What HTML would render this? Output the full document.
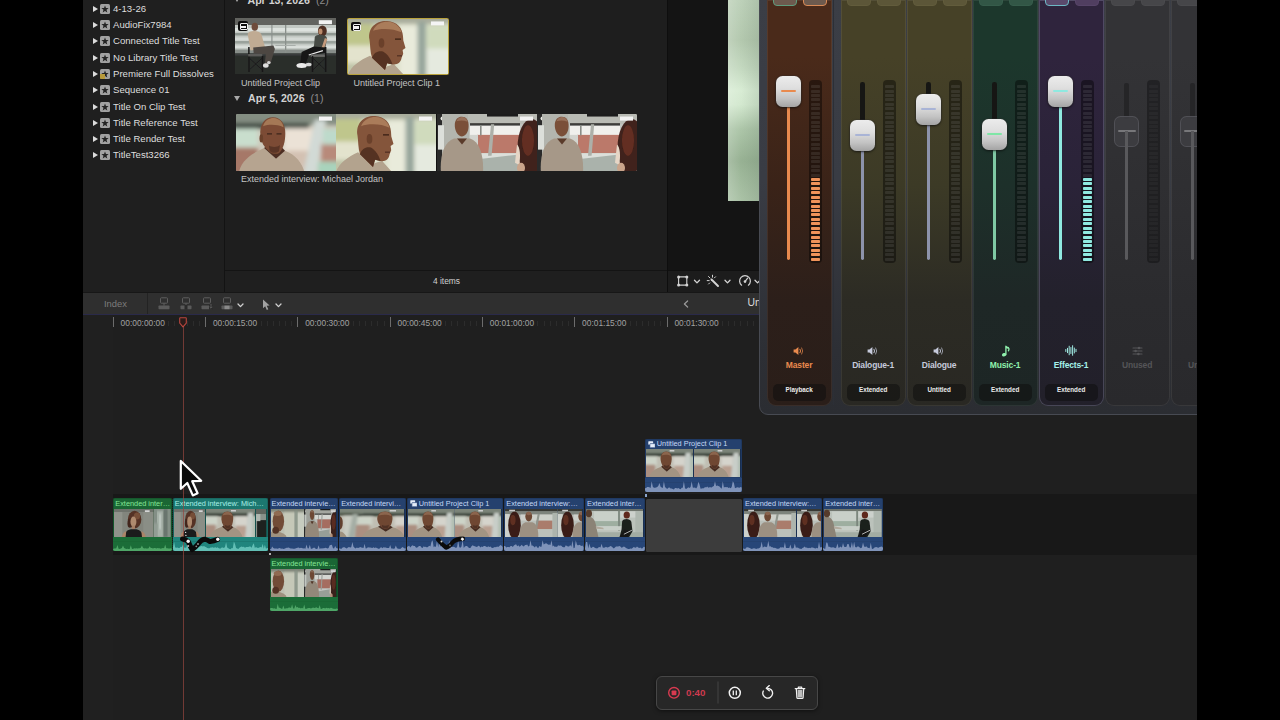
<!DOCTYPE html>
<html lang="en">
<head>
<meta charset="utf-8">
<title>Timeline Mixer</title>
<style>
*{box-sizing:border-box;margin:0;padding:0}
html,body{width:1280px;height:720px;overflow:hidden;background:#000;}
body{position:relative;font-family:"Liberation Sans",sans-serif;color:#ddd;}
.a{position:absolute}
#app{position:absolute;left:0;top:0;width:1280px;height:720px;background:#1e1e1e;overflow:hidden}
.bar{position:absolute;top:0;height:720px;background:#000;z-index:50}
/* sidebar */
#sidebar{position:absolute;left:83px;top:0;width:141px;height:292px;background:#1f1f1f}
.sbi{position:absolute;left:0;height:14px;width:141px;margin-top:.7px;font-size:9.6px;line-height:14px;color:#dedede;white-space:nowrap}
.sbi .tri{position:absolute;left:10px;top:4px;width:0;height:0;border-left:5.5px solid #dcdcdc;border-top:3px solid transparent;border-bottom:3px solid transparent}
.sbi .ico{position:absolute;left:16.5px;top:2px;width:10px;height:10px;background:#a2a2a2;border-radius:1.5px}
.sbi .ico svg{position:absolute;left:1px;top:1px}
.sbi .lbl{position:absolute;left:30px;top:0}
/* browser */
#browser{position:absolute;left:224px;top:0;width:444px;height:292px;background:#1e1e1e;border-left:1px solid #131313}
#viewer{position:absolute;left:667px;top:0;width:93px;height:292px;background:#141414;border-left:1px solid #0e0e0e}
.cap{position:absolute;font-size:9px;color:#c4c4c4;white-space:nowrap;line-height:11px}
.dh{position:absolute;font-size:10.6px;font-weight:700;color:#d2d2d2;white-space:nowrap;line-height:12px}
.dh i{font-style:normal;font-weight:400;color:#8c8c8c;margin-left:6px}
.dtri{position:absolute;width:0;height:0;border-top:5.5px solid #a8a8a8;border-left:3.2px solid transparent;border-right:3.2px solid transparent}
.th{position:absolute;overflow:hidden}
.badge{position:absolute;left:3px;top:3px;width:10px;height:9.5px;background:#0c0c0c;border-radius:2px}
.badge:before{content:"";position:absolute;left:2px;top:2px;width:6px;height:5px;border:1px solid #f0f0f0;border-radius:1px}
.badge:after{content:"";position:absolute;left:2px;top:4.5px;width:6px;height:2.5px;background:#f0f0f0}
/* mixer */
#mixer{position:absolute;left:759px;top:-10px;width:460px;height:425px;background:linear-gradient(180deg,#3b3e46 0%,#393c44 45%,#2d2f35 85%,#2b2d32 100%);border:1px solid #474a52;border-radius:9px;overflow:hidden}
#mixer>*{margin-top:9px;margin-left:-1px}
.strip{position:absolute;top:0;width:64.8px;margin-left:-1.4px !important;height:405.5px;border-radius:0 0 9px 9px;box-shadow:inset 0 0 0 1px rgba(255,255,255,.07);overflow:hidden}
.strip.hl{box-shadow:inset 0 0 0 1px rgba(170,170,200,.28)}
.tb{position:absolute;top:-6px;width:24px;height:11.5px;border:1px solid #555;border-radius:4px}
.trk{position:absolute;border-radius:1.4px}
.meter{position:absolute;left:41.5px;top:79.5px;width:13px;height:183px;border-radius:4px}
.meter i{position:absolute;left:2px;width:9px;height:3px;border-radius:.8px}
.knob{position:absolute;left:9px;width:25px;height:31px;border-radius:6.5px;background:linear-gradient(180deg,#ececec 0%,#dedede 40%,#c4c4c4 72%,#a4a4a4 100%);box-shadow:0 1px 2.5px rgba(0,0,0,.6),0 0 0 .6px rgba(60,60,60,.55)}
.knob b{position:absolute;left:5px;right:5px;top:14px;height:2.2px;border-radius:1px}
.knob.dimk{background:rgba(62,62,66,.88);box-shadow:inset 0 0 0 1px rgba(110,110,116,.42)}
.knob.dimk b{left:3.5px;right:3.5px;top:14.2px;height:2px}
.knob.dimk u{position:absolute;left:10.9px;top:15px;width:3px;height:16px;background:#59595c}
.sl{position:absolute;left:0;width:64px;top:359.8px;text-align:center;font-size:8.5px;font-weight:700;line-height:11px;white-space:nowrap;letter-spacing:-.15px}
.pill{position:absolute;left:5.5px;top:383.5px;width:53px;height:17px;border-radius:5px;background:rgba(14,14,14,.55);text-align:center;font-size:6.3px;font-weight:700;color:#ececec;line-height:12px}
/* toolbar */
#toolbar{position:absolute;left:83px;top:291.6px;width:677px;height:23.4px;background:#2f2f2f;border-top:1px solid #171717;border-bottom:1.6px solid #2a2a4a}
#timeline{position:absolute;left:83px;top:314px;width:1114px;height:406px;background:#1f1f1f}
.tc{position:absolute;top:318px;font-size:8.4px;color:#a2a2a2;white-space:nowrap;line-height:10px}
.tick{position:absolute;top:317.3px;width:1.2px;height:9.6px;background:#6c6c6c}
.mt{position:absolute;top:321px;width:1px;height:5px;background:#2c2c2c}
#ruler{position:absolute;left:0;top:0;width:760px;height:0}
/* clips */
.clip{position:absolute;overflow:hidden;border-radius:2px}
.clip .t{position:absolute;left:3px;top:0.7px;font-size:7.35px;line-height:10px;white-space:nowrap}
.clip .thumb{position:absolute;left:1.2px;right:1.2px;top:10.7px;height:28.3px;overflow:hidden}
.clip .thumb:after{content:"";position:absolute;left:0;top:0;right:0;bottom:0;background:rgba(24,32,28,.13)}
.clip .wave{position:absolute;left:0;right:0;bottom:0;height:14px}
.g{background:#1f6b33}.g .t{color:#8be08f}
.tl{background:#1f7a74}.tl .t{color:#9ee8e0}
.b{background:#274a78}.b .t{color:#a9c4ec}
</style>
</head>
<body>
<div id="app">
<svg width="0" height="0" style="position:absolute">
<defs>
<filter id="bl1" x="-10%" y="-10%" width="120%" height="120%"><feGaussianBlur stdDeviation="1.2"/></filter>
<filter id="bl2" x="-10%" y="-10%" width="120%" height="120%"><feGaussianBlur stdDeviation="2.2"/></filter>
<filter id="bl05" x="-10%" y="-10%" width="120%" height="120%"><feGaussianBlur stdDeviation="0.6"/></filter>
<!-- A: close-up, front-left -->
<symbol id="fA" viewBox="0 0 100 56" preserveAspectRatio="none">
<rect width="100" height="56" fill="#cfc9bb"/>
<g filter="url(#bl2)">
<rect x="-5" y="-5" width="110" height="16" fill="#848e82"/>
<rect x="-5" y="9" width="78" height="5.5" fill="#39433a"/>
<rect x="-5" y="14.5" width="27" height="18" fill="#c9decd"/>
<rect x="-5" y="33" width="27" height="28" fill="#a67868"/>
<rect x="48" y="14" width="28" height="26" fill="#ebe2d6"/>
<rect x="50" y="36" width="24" height="25" fill="#d3c1b2"/>
<polygon points="79,6 90,6 80,60 67,60" fill="#d2dad6"/>
<rect x="87" y="15" width="20" height="15" fill="#bddacb"/>
<rect x="85" y="30" width="20" height="17" fill="#b88a7a"/>
<rect x="82" y="47" width="24" height="14" fill="#a9d3bc"/>
</g>
<g filter="url(#bl05)">
<path d="M3,57 C6,44 18,38 28,33.5 L40,44 L49,36 C60,40 66,48 68.5,57 Z" fill="#b6a490"/>
<path d="M28,33.5 L40,44 L49,36 L46,33 L31,31 Z" fill="#4e2f22"/>
<path d="M24.5,22 C23,10 29,3.2 37,3.3 C45,3.4 49.5,10 49.3,19 C49.3,27 47.5,34 43.5,38 C40.5,40 36,39.5 32.5,36 C28,32 25.5,28 24.5,22 Z" fill="#7b4c35"/>
<path d="M27,12 C29,5.5 34,3.8 38,4 C43,4.4 47,8 47.5,13 C41,10 33,10 27,12 Z" fill="#a57857"/>
<ellipse cx="25.3" cy="24" rx="1.8" ry="4" fill="#69402c"/>
<path d="M33,31 C36,33 41,33 44,30.5 L43,36.5 C40,39 36,38.6 33.5,36 Z" fill="#5a3526"/>
<path d="M31,19.5 h5 M40.5,19.5 h5" stroke="#3f251a" stroke-width="1.3"/>
</g>
<rect x="83" y="2.5" width="13" height="4" fill="#f4f4f4"/>
</symbol>
<!-- B: profile close-up -->
<symbol id="fB" viewBox="0 0 100 56" preserveAspectRatio="none">
<rect width="100" height="56" fill="#dde0cb"/>
<g filter="url(#bl2)">
<rect x="-5" y="-5" width="110" height="10" fill="#a8ac9b"/>
<rect x="-5" y="5" width="30" height="24" fill="#bfc68c"/>
<rect x="-5" y="27" width="30" height="18" fill="#e3e3cd"/>
<rect x="52" y="7" width="18" height="52" fill="#e9ebdb"/>
<rect x="69.5" y="3" width="8.5" height="58" fill="#96a59b"/>
<rect x="79" y="7" width="26" height="25" fill="#d0dbbd"/>
<rect x="79" y="30" width="26" height="30" fill="#e5eadf"/>
<rect x="-5" y="45" width="18" height="15" fill="#c0c5a8"/>
</g>
<g filter="url(#bl05)">
<path d="M0,57 C3,48 12,42 22,37.5 L36,49 L46,46 L56,57 Z" fill="#b3a38e"/>
<path d="M21.5,21 C19.5,9 28,1.5 39,2 C49,2.5 54.5,9 55,17.5 L55.3,22 L57.5,29.5 L54.6,31.5 L55.2,35.5 L53.6,39.5 C53,44.5 49,47 44.5,46.2 L39,45 L37,52 L24,39.5 C22,33 22.4,27 21.5,21 Z" fill="#84543a"/>
<path d="M25,12 C28,4.5 35,2.6 40,2.9 C47,3.3 52,7.5 53.5,13.5 C45,9.5 33,9 25,12 Z" fill="#aa7b5a"/>
<path d="M24,39.5 C26,34 30,32 35,33 C40,36 43,41 44.5,46.2 L39,45 L37,52 Z" fill="#543222"/>
<ellipse cx="33.5" cy="24.5" rx="2.8" ry="4.8" fill="#6a3f2b"/>
<path d="M47,20.5 h6" stroke="#3f251a" stroke-width="1.4"/>
<path d="M49,37.5 h5" stroke="#4a2b1f" stroke-width="1.1"/>
</g>
<rect x="83" y="2.5" width="13" height="4" fill="#f4f4f4"/>
</symbol>
<!-- C: medium shot with hair on right -->
<symbol id="fC" viewBox="0 0 100 56" preserveAspectRatio="none">
<rect width="100" height="56" fill="#c2c4be"/>
<g filter="url(#bl05)">
<rect x="-3" y="-3" width="8" height="62" fill="#2b2c29"/>
<ellipse cx="5.5" cy="4.5" rx="2" ry="2" fill="#e8e8e4"/>
<rect x="5" y="-3" width="27" height="62" fill="#b3b5ae"/>
<rect x="1" y="11" width="6" height="24" fill="#dcdfda"/>
<rect x="31" y="-3" width="72" height="13" fill="#b9bbb4"/>
<rect x="50" y="-3" width="31" height="5.5" fill="#1d1d1b"/>
<rect x="33" y="9" width="50" height="2.6" fill="#3d3d3a"/>
<rect x="33" y="11.5" width="50" height="9.5" fill="#f0f0ec"/>
<rect x="40" y="20.5" width="42" height="18" fill="#bb796a"/>
<rect x="33" y="20.5" width="8" height="20" fill="#d2d4ce"/>
<rect x="34" y="38.5" width="54" height="20" fill="#dcdfda"/>
<polygon points="45,44 80,40 84,58 40,58" fill="#aab2ab"/>
<polygon points="54,10 57.2,10 54.6,41 51,41" fill="#adb0a9"/>
<rect x="43" y="11" width="1.6" height="10" fill="#8a8d87"/>
</g>
<g filter="url(#bl05)">
<path d="M4,58 C2.5,42 7,27 17,24 L33,24 C43,27 47,42 46,58 Z" fill="#a69888"/>
<path d="M20,24 L25,30 L30,24 Z" fill="#5a3a2a"/>
<path d="M17.8,12 C17.5,5 21,2.6 25,2.6 C29,2.6 32,5.5 31.6,12 C31.4,17 29.5,21.5 25,22 C21,21.8 18.2,17 17.8,12 Z" fill="#7a5039"/>
<path d="M19.5,7 C21,3.6 23.5,3 25,3 C27.5,3 30,4.6 30.6,7.6 C27,6 23,6 19.5,7 Z" fill="#97705a"/>
<ellipse cx="94.5" cy="33" rx="14" ry="28" fill="#40201a"/>
<ellipse cx="91" cy="26" rx="6" ry="15" fill="#642f22"/>
<path d="M80,30 C83,32 84,42 82,50 L78,48 Z" fill="#e6d6c6"/>
<ellipse cx="84" cy="53" rx="4" ry="5" fill="#c9a48b"/>
</g>
<rect x="83" y="2.5" width="13" height="4" fill="#f2f2f2"/>
</symbol>
<!-- D: wide two-shot -->
<symbol id="fD" viewBox="0 0 100 56" preserveAspectRatio="none">
<rect width="100" height="56" fill="#2b2d2c"/>
<g filter="url(#bl05)">
<rect x="0" y="0" width="100" height="7.5" fill="#62645f"/>
<rect x="0" y="7" width="100" height="28.5" fill="#c2c8c3"/>
<rect x="0" y="10" width="100" height="3.5" fill="#dde2de"/>
<rect x="0" y="15" width="100" height="2.5" fill="#8f9791"/>
<rect x="0" y="19.5" width="100" height="3" fill="#d5dad6"/>
<rect x="0" y="23" width="100" height="2.6" fill="#9aa29c"/>
<rect x="0" y="27.5" width="100" height="2.5" fill="#d9deda"/>
<rect x="0" y="31.5" width="100" height="4" fill="#878d89"/>
<rect x="36" y="7" width="1.1" height="28" fill="#8a908c"/>
<rect x="49.5" y="7" width="1.3" height="28" fill="#8a908c"/>
<rect x="40" y="27" width="20" height="1" fill="#a8aeaa"/>
<rect x="0" y="35.5" width="100" height="21" fill="#2b2d2c"/>
<rect x="0" y="35.5" width="100" height="2" fill="#3b3e3c"/>
<!-- man -->
<ellipse cx="19.6" cy="8.8" rx="3.2" ry="4" fill="#6e4c3a"/>
<path d="M12.5,16 C13.5,12 24,12 26,16 L30,30 L15.5,32.5 Z" fill="#c0ab93"/>
<path d="M18,29.5 L38,27.5 L39.5,31 L35,46 L29.5,46 L30.5,36 L18.5,35.5 Z" fill="#4d4743"/>
<rect x="13" y="29" width="1.5" height="25" fill="#191919"/>
<rect x="13" y="36" width="14" height="2.4" fill="#5a5a58"/>
<rect x="26.5" y="38" width="1.5" height="16" fill="#191919"/>
<path d="M14,40 L27,52 M27,40 L14,52" stroke="#1c1c1c" stroke-width=".9"/>
<ellipse cx="30.5" cy="47.5" rx="2.8" ry="2.2" fill="#dedede"/>
<ellipse cx="33.5" cy="44.6" rx="1.8" ry="1.6" fill="#d2d2d2"/>
<!-- woman -->
<ellipse cx="86.5" cy="13" rx="4.4" ry="5.6" fill="#4e2e22"/>
<ellipse cx="84.6" cy="13.6" rx="2" ry="3" fill="#b98a6a"/>
<path d="M79,19 C80,16 90,16 91,20 L89.5,30 L78,30 Z" fill="#474b45"/>
<path d="M89,20 L91.5,21 L88,31 L80,33 L79.5,31 L86,29 Z" fill="#c49a7c"/>
<path d="M66,34 L78,28.5 L90,29.5 L89,35 L73,37.5 L69.5,47 L64.5,46.5 Z" fill="#141414"/>
<path d="M73,37 L87,32.6" stroke="#ececec" stroke-width="1.3"/>
<ellipse cx="66" cy="47.5" rx="5.2" ry="2.5" fill="#ebebeb"/>
<ellipse cx="73" cy="46.5" rx="3" ry="1.8" fill="#d8d8d8"/>
<rect x="75" y="36.5" width="15" height="2.4" fill="#6a6a68"/>
<rect x="76" y="38" width="1.5" height="16" fill="#191919"/>
<rect x="89" y="29" width="1.5" height="25" fill="#191919"/>
<path d="M77,40 L89.5,52 M89.5,40 L77,52" stroke="#1c1c1c" stroke-width=".9"/>
</g>
<rect x="83" y="2.2" width="13" height="4" fill="#f2f2f2"/>
</symbol>
<!-- W: woman close (timeline) -->
<symbol id="fW" viewBox="0 0 100 56" preserveAspectRatio="none">
<rect width="100" height="56" fill="#92958c"/>
<g filter="url(#bl1)">
<rect x="-3" y="-3" width="106" height="9" fill="#7d8078"/>
<rect x="-3" y="6" width="24" height="52" fill="#a2a59c"/>
<rect x="74" y="6" width="30" height="52" fill="#9c9f96"/>
<ellipse cx="52" cy="21" rx="17" ry="17.5" fill="#5e3525"/>
<ellipse cx="58" cy="14" rx="8" ry="7" fill="#85543a"/>
<ellipse cx="40" cy="28" rx="6" ry="9" fill="#4a281c"/>
<ellipse cx="49" cy="25" rx="7.5" ry="10" fill="#c59a7a"/>
<rect x="45" y="33" width="8" height="7" fill="#b88c6e"/>
<path d="M24,58 C26,45 35,41 43,40 L57,40 C66,42 73,46 75,58 Z" fill="#1a1a1a"/>
<path d="M19,58 C21,49 25,45 31,44 L29,58 Z" fill="#c09474"/>
<path d="M81,58 C79,49 75,45 69,44 L71,58 Z" fill="#c09474"/>
</g>
<rect x="78" y="2.5" width="12" height="3.5" fill="#f0f0f0"/>
</symbol>
<!-- N: narrow gray filler -->
<symbol id="fN" viewBox="0 0 100 56" preserveAspectRatio="none">
<rect width="100" height="56" fill="#94a096"/>
<g filter="url(#bl2)">
<rect x="18" y="4" width="34" height="52" fill="#bcc8be"/>
<rect x="30" y="10" width="12" height="30" fill="#d4ded6"/>
<rect x="58" y="0" width="22" height="56" fill="#76827a"/>
<rect x="-4" y="28" width="26" height="30" fill="#a4b0a6"/>
</g>
</symbol>
<!-- F: medium shot, hair on left -->
<symbol id="fF" viewBox="0 0 100 56" preserveAspectRatio="none">
<rect width="100" height="56" fill="#d3d7d0"/>
<g filter="url(#bl1)">
<rect x="-3" y="-3" width="106" height="8" fill="#3c3d39"/>
<rect x="0" y="5" width="100" height="6" fill="#8e938b"/>
<rect x="-3" y="10" width="12" height="50" fill="#e9ece6"/>
<rect x="30" y="11" width="72" height="12" fill="#e8ebe4"/>
<rect x="60" y="23" width="30" height="17" fill="#c08a78"/>
<rect x="56" y="40" width="48" height="20" fill="#d5dad3"/>
<polygon points="62,10 66,10 60,44 56,44" fill="#a2a89f"/>
<rect x="90" y="8" width="12" height="50" fill="#c4cbc3"/>
<ellipse cx="18" cy="32" rx="12" ry="27" fill="#401f17"/>
<ellipse cx="15" cy="22" rx="5" ry="10" fill="#6a3323"/>
<path d="M28,58 C26,42 31,28 39,26 L52,26 C61,29 64,42 63,58 Z" fill="#b0a191"/>
<ellipse cx="45" cy="15" rx="6.5" ry="9.5" fill="#7a4f38"/>
<ellipse cx="45" cy="9" rx="5" ry="3.4" fill="#9a6e54"/>
</g>
<rect x="8" y="1.5" width="11" height="3" fill="#e2e2e2"/>
</symbol>
<!-- G: wide bright shot -->
<symbol id="fG" viewBox="0 0 100 56" preserveAspectRatio="none">
<rect width="100" height="56" fill="#d4dbd3"/>
<g filter="url(#bl1)">
<rect x="-3" y="-3" width="106" height="7" fill="#7b8279"/>
<rect x="14" y="5" width="42" height="20" fill="#e4ebe3"/>
<rect x="14" y="24" width="50" height="10" fill="#b2c4b4"/>
<rect x="56" y="3" width="3" height="40" fill="#8a968b"/>
<rect x="60" y="5" width="40" height="12" fill="#e7ece6"/>
<rect x="86" y="4" width="16" height="56" fill="#c5cec5"/>
<rect x="14" y="34" width="48" height="8" fill="#e2e8e1"/>
<rect x="-2" y="46" width="104" height="12" fill="#b7c1b7"/>
<path d="M-2,58 L-2,15 C7,12 15,18 17,30 L22,58 Z" fill="#9d9283"/>
<ellipse cx="5" cy="9" rx="5.5" ry="7.5" fill="#5e3f2d"/>
<path d="M17,34 L30,37 L31,40 L18,39 Z" fill="#c9bfb0"/>
<ellipse cx="71" cy="12" rx="5.5" ry="7" fill="#6b2a1b"/>
<path d="M63,24 C65,18 77,18 79,25 L81,44 L74,58 L58,58 L62,40 Z" fill="#1f201e"/>
<path d="M57,58 L67,41 L77,43 L71,58 Z" fill="#131313"/>
<path d="M66,50 L80,42" stroke="#e8e8e8" stroke-width="1.6"/>
</g>
</symbol>
<!-- H: close-up, dark left edge (looking left) -->
<symbol id="fH" viewBox="0 0 100 56" preserveAspectRatio="none">
<rect width="100" height="56" fill="#d6d8c8"/>
<g filter="url(#bl2)">
<rect x="-5" y="-5" width="110" height="11" fill="#8f9486"/>
<rect x="40" y="6" width="30" height="50" fill="#dfe2cf"/>
<rect x="70" y="4" width="10" height="56" fill="#a2ad9f"/>
<rect x="80" y="8" width="25" height="50" fill="#e2e6d8"/>
</g>
<g filter="url(#bl1)">
<ellipse cx="22" cy="24" rx="17" ry="21" fill="#80523a"/>
<ellipse cx="20" cy="9" rx="12" ry="5" fill="#a3775a"/>
<path d="M-2,58 L-2,46 C8,42 30,44 44,52 L48,58 Z" fill="#b3a28e"/>
<ellipse cx="14" cy="42" rx="10" ry="7" fill="#5b3625"/>
</g>
</symbol>
<symbol id="fK" viewBox="0 0 100 56" preserveAspectRatio="none">
<rect width="100" height="56" fill="#9aa39a"/>
<rect x="0" y="0" width="100" height="10" fill="#6a7068"/>
<rect x="10" y="22" width="90" height="34" fill="#1e2220"/>
<rect x="0" y="10" width="40" height="14" fill="#c5cec6"/>
</symbol>
<symbol id="fE" viewBox="0 0 100 56" preserveAspectRatio="none">
<rect width="100" height="56" fill="#d9d6c9"/>
<g filter="url(#bl2)">
<rect x="-5" y="-5" width="110" height="14" fill="#8b9487"/>
<rect x="-5" y="8.5" width="110" height="5.5" fill="#2b3429"/>
<rect x="-5" y="15" width="28" height="17" fill="#e9efe2"/>
<rect x="-5" y="31" width="24" height="30" fill="#c2a090"/>
<rect x="58" y="15" width="24" height="19" fill="#f2efe6"/>
<rect x="60" y="33" width="20" height="27" fill="#d1b4a3"/>
<polygon points="84,8 95,8 92,60 78,60" fill="#e3e8e2"/>
<rect x="93" y="14" width="12" height="44" fill="#c9d7c9"/>
</g>
<g filter="url(#bl05)">
<path d="M6,58 C9,44 22,38 32,35 L44,45 L55,36 C66,40 72,48 74,58 Z" fill="#b7a692"/>
<path d="M32,35 L44,45 L55,36 L51,33 L36,32 Z" fill="#4e2f22"/>
<path d="M31,22 C30,11 35,5 43,5 C51,5 55,11 54.5,20 C54,28 52,34 48.5,37.5 C45.5,40 41,39.5 38,36.5 C34,32.5 32,28 31,22 Z" fill="#7b4d36"/>
<path d="M33,13 C35,7 39,5.5 43,5.6 C48,5.8 52,9 53,14 C47,11 39,11 33,13 Z" fill="#9d7054"/>
<path d="M38,31.5 C41,33.5 46,33.5 49,31 L48,36.5 C45,39 41,38.6 38.5,36 Z" fill="#583425"/>
</g>
<rect x="50" y="2" width="10" height="3" fill="#e8e8e8"/>
</symbol>
<symbol id="fE2" viewBox="0 0 100 56" preserveAspectRatio="none">
<rect width="100" height="56" fill="#d9d6c9"/>
<g transform="translate(27,0)">
<rect width="100" height="56" fill="#d9d6c9"/>
<g filter="url(#bl2)">
<rect x="-5" y="-5" width="110" height="14" fill="#8b9487"/>
<rect x="-5" y="8.5" width="110" height="5.5" fill="#2b3429"/>
<rect x="-5" y="15" width="28" height="17" fill="#e9efe2"/>
<rect x="-5" y="31" width="24" height="30" fill="#c2a090"/>
<rect x="58" y="15" width="24" height="19" fill="#f2efe6"/>
<rect x="60" y="33" width="20" height="27" fill="#d1b4a3"/>
<polygon points="84,8 95,8 92,60 78,60" fill="#e3e8e2"/>
<rect x="93" y="14" width="12" height="44" fill="#c9d7c9"/>
</g>
<g filter="url(#bl05)">
<path d="M6,58 C9,44 22,38 32,35 L44,45 L55,36 C66,40 72,48 74,58 Z" fill="#b7a692"/>
<path d="M32,35 L44,45 L55,36 L51,33 L36,32 Z" fill="#4e2f22"/>
<path d="M31,22 C30,11 35,5 43,5 C51,5 55,11 54.5,20 C54,28 52,34 48.5,37.5 C45.5,40 41,39.5 38,36.5 C34,32.5 32,28 31,22 Z" fill="#7b4d36"/>
<path d="M33,13 C35,7 39,5.5 43,5.6 C48,5.8 52,9 53,14 C47,11 39,11 33,13 Z" fill="#9d7054"/>
<path d="M38,31.5 C41,33.5 46,33.5 49,31 L48,36.5 C45,39 41,38.6 38.5,36 Z" fill="#583425"/>
</g>
<rect x="50" y="2" width="10" height="3" fill="#e8e8e8"/>
</g>
<g filter="url(#bl2)"><rect x="-5" y="-5" width="40" height="14" fill="#8b9487"/><rect x="-5" y="8" width="36" height="5" fill="#434c3b"/><rect x="6" y="13" width="14" height="44" fill="#e4e6dc"/><polygon points="20,10 28,10 22,60 12,60" fill="#b9c2b8"/></g><g filter="url(#bl05)"><path d="M-2,14 C3,14 5,22 4,32 C3,38 2,40 -2,42 Z" fill="#6d4531"/><path d="M-2,44 C4,44 9,50 11,58 L-2,58 Z" fill="#b3a28e"/></g>
</symbol>
</defs>
</svg>
<div id="sidebar">
<div class="sbi" style="top:1.0px"><span class="tri"></span><span class="ico"><svg width="8" height="8" viewBox="0 0 10 10"><polygon points="5,0.6 6.2,3.8 9.6,3.9 6.9,6 7.9,9.3 5,7.4 2.1,9.3 3.1,6 0.4,3.9 3.8,3.8" fill="#242424"/></svg></span><span class="lbl">4-13-26</span></div>
<div class="sbi" style="top:17.4px"><span class="tri"></span><span class="ico"><svg width="8" height="8" viewBox="0 0 10 10"><polygon points="5,0.6 6.2,3.8 9.6,3.9 6.9,6 7.9,9.3 5,7.4 2.1,9.3 3.1,6 0.4,3.9 3.8,3.8" fill="#242424"/></svg></span><span class="lbl">AudioFix7984</span></div>
<div class="sbi" style="top:33.7px"><span class="tri"></span><span class="ico"><svg width="8" height="8" viewBox="0 0 10 10"><polygon points="5,0.6 6.2,3.8 9.6,3.9 6.9,6 7.9,9.3 5,7.4 2.1,9.3 3.1,6 0.4,3.9 3.8,3.8" fill="#242424"/></svg></span><span class="lbl">Connected Title Test</span></div>
<div class="sbi" style="top:50.0px"><span class="tri"></span><span class="ico"><svg width="8" height="8" viewBox="0 0 10 10"><polygon points="5,0.6 6.2,3.8 9.6,3.9 6.9,6 7.9,9.3 5,7.4 2.1,9.3 3.1,6 0.4,3.9 3.8,3.8" fill="#242424"/></svg></span><span class="lbl">No Library Title Test</span></div>
<div class="sbi" style="top:66.3px"><span class="tri"></span><span class="ico"><svg width="8" height="8" viewBox="0 0 10 10"><polygon points="5,0.6 6.2,3.8 9.6,3.9 6.9,6 7.9,9.3 5,7.4 2.1,9.3 3.1,6 0.4,3.9 3.8,3.8" fill="#242424"/></svg></span><span class="a" style="left:16.5px;top:7px;width:5px;height:5px;background:#b89a3a;border-radius:0 0 0 1.5px"></span><span class="lbl">Premiere Full Dissolves</span></div>
<div class="sbi" style="top:82.6px"><span class="tri"></span><span class="ico"><svg width="8" height="8" viewBox="0 0 10 10"><polygon points="5,0.6 6.2,3.8 9.6,3.9 6.9,6 7.9,9.3 5,7.4 2.1,9.3 3.1,6 0.4,3.9 3.8,3.8" fill="#242424"/></svg></span><span class="lbl">Sequence 01</span></div>
<div class="sbi" style="top:98.9px"><span class="tri"></span><span class="ico"><svg width="8" height="8" viewBox="0 0 10 10"><polygon points="5,0.6 6.2,3.8 9.6,3.9 6.9,6 7.9,9.3 5,7.4 2.1,9.3 3.1,6 0.4,3.9 3.8,3.8" fill="#242424"/></svg></span><span class="lbl">Title On Clip Test</span></div>
<div class="sbi" style="top:115.2px"><span class="tri"></span><span class="ico"><svg width="8" height="8" viewBox="0 0 10 10"><polygon points="5,0.6 6.2,3.8 9.6,3.9 6.9,6 7.9,9.3 5,7.4 2.1,9.3 3.1,6 0.4,3.9 3.8,3.8" fill="#242424"/></svg></span><span class="lbl">Title Reference Test</span></div>
<div class="sbi" style="top:131.5px"><span class="tri"></span><span class="ico"><svg width="8" height="8" viewBox="0 0 10 10"><polygon points="5,0.6 6.2,3.8 9.6,3.9 6.9,6 7.9,9.3 5,7.4 2.1,9.3 3.1,6 0.4,3.9 3.8,3.8" fill="#242424"/></svg></span><span class="lbl">Title Render Test</span></div>
<div class="sbi" style="top:147.8px"><span class="tri"></span><span class="ico"><svg width="8" height="8" viewBox="0 0 10 10"><polygon points="5,0.6 6.2,3.8 9.6,3.9 6.9,6 7.9,9.3 5,7.4 2.1,9.3 3.1,6 0.4,3.9 3.8,3.8" fill="#242424"/></svg></span><span class="lbl">TitleTest3266</span></div>
</div>
<div id="browser">
  <!-- coordinates relative to browser left=224 -->
  <div class="dtri" style="left:9px;top:-3px"></div>
  <div class="dh" style="left:22.5px;top:-6px">Apr 13, 2026<i>(2)</i></div>
  <div class="th" style="left:9.5px;top:18px;width:101.5px;height:56px"><svg width="101" height="56"><use href="#fD" width="101" height="56"/></svg>
    <div class="badge"></div></div>
  <div class="th" style="left:122px;top:17.5px;width:102px;height:57px;border:1px solid #b9a23c;border-radius:1.5px"><svg width="100" height="55"><use href="#fB" width="100" height="55"/></svg>
    <div class="badge"></div></div>
  <div class="cap" style="left:16px;top:77.5px">Untitled Project Clip</div>
  <div class="cap" style="left:128.5px;top:77.5px">Untitled Project Clip 1</div>
  <div class="dtri" style="left:9px;top:95.5px"></div>
  <div class="dh" style="left:23px;top:92px">Apr 5, 2026<i>(1)</i></div>
  <div class="th" style="left:10.5px;top:114px;width:401.5px;height:57px;border-radius:1.5px;background:#111">
    <svg class="a" style="left:0;top:0" width="100" height="57"><use href="#fA" width="100" height="57"/></svg>
    <svg class="a" style="left:100.5px;top:0" width="100" height="57"><use href="#fB" width="100" height="57"/></svg>
    <svg class="a" style="left:201px;top:0" width="100" height="57"><use href="#fC" width="100" height="57"/></svg>
    <svg class="a" style="left:301.5px;top:0" width="100" height="57"><use href="#fC" width="100" height="57"/></svg>
  </div>
  <div class="cap" style="left:16px;top:173.5px">Extended interview: Michael Jordan</div>
  <div class="a" style="left:0;top:270px;width:443px;height:22px;border-top:1px solid #141414;background:#1f1f1f"></div>
  <div class="cap" style="left:0;width:443px;text-align:center;top:276px;font-size:8.4px;color:#d0d0d0">4 items</div>
</div>
<div id="viewer">
  <div class="a" style="left:59.5px;top:0;width:33.5px;height:201px;background:linear-gradient(180deg,#bdd1b9 0%,#b3c8ae 20%,#c4d9c0 34%,#d8ecd4 45%,#d3e8cf 52%,#adc6a9 64%,#97b193 80%,#a3bc9f 92%,#aac2a6 100%);"></div>
  <div class="a" style="left:59.5px;top:0;width:33.5px;height:201px;background:linear-gradient(90deg,rgba(255,255,255,.18),rgba(255,255,255,.0) 40%,rgba(90,110,95,.18) 100%)"></div>
  <div class="a" style="left:0;top:270px;width:93px;height:22px;background:#1c1c1c;border-top:1px solid #101010"></div>
</div>
<div id="timeline">
  <div class="a" style="left:0;top:0;width:30px;height:406px;background:#202020"></div>
  <div class="a" style="left:30px;top:180px;width:1084px;height:60.5px;background:#181818"></div>
</div>
<div id="toolbar">
  <div class="a" style="left:0;top:0;width:65px;height:21px;background:#2f2f2f;border-right:1px solid #232323"></div>
  <div class="a" style="left:21px;top:5px;font-size:9.4px;line-height:12px;color:#7c7c7c">Index</div>
<svg class="a" style="left:75px;top:4.5px" width="12" height="13" viewBox="0 0 12 13"><rect x="2.5" y="0.8" width="7" height="5.4" rx="0.8" fill="none" stroke="#5e5e5e" stroke-width="1"/><rect x="0.5" y="8.6" width="11" height="3.6" rx="0.6" fill="#5a5a5a"/><path d="M6,6.2 V8.6" stroke="#5e5e5e" stroke-width="1"/></svg><svg class="a" style="left:96.6px;top:4.5px" width="12" height="13" viewBox="0 0 12 13"><rect x="2.5" y="0.8" width="7" height="5.4" rx="0.8" fill="none" stroke="#5e5e5e" stroke-width="1"/><rect x="0.5" y="8.6" width="11" height="3.6" rx="0.6" fill="#5a5a5a"/><path d="M6,6.2 V8.6" stroke="#5e5e5e" stroke-width="1"/><rect x="4.5" y="8" width="3" height="4.6" fill="#2b2b2b"/></svg><svg class="a" style="left:117.5px;top:4.5px" width="12" height="13" viewBox="0 0 12 13"><rect x="2.5" y="0.8" width="7" height="5.4" rx="0.8" fill="none" stroke="#5e5e5e" stroke-width="1"/><rect x="0.5" y="8.6" width="11" height="3.6" rx="0.6" fill="#5a5a5a"/><rect x="8" y="8" width="4" height="4.6" fill="#2b2b2b"/><path d="M10,7 v4 M8.6,9.8 l1.4,1.4 l1.4,-1.4" stroke="#5e5e5e" stroke-width="0.9" fill="none"/></svg><svg class="a" style="left:138px;top:4.5px" width="12" height="13" viewBox="0 0 12 13"><rect x="2.5" y="0.8" width="7" height="5.4" rx="0.8" fill="none" stroke="#5e5e5e" stroke-width="1"/><rect x="0.5" y="8.6" width="11" height="3.6" rx="0.6" fill="#5a5a5a"/><rect x="3.5" y="8.6" width="5" height="3.6" fill="#8a8a8a"/></svg><svg class="a" style="left:153.5px;top:10.5px" width="7" height="5" viewBox="0 0 7 5"><path d="M1,1 L3.5,3.6 L6,1" fill="none" stroke="#d0d0d0" stroke-width="1.3" stroke-linecap="round" stroke-linejoin="round"/></svg><svg class="a" style="left:178.5px;top:6px" width="9" height="12" viewBox="0 0 9 12"><path d="M1,0.5 L1,9.2 L3.2,7.2 L4.8,11 L6.3,10.3 L4.7,6.7 L7.6,6.5 Z" fill="#a2a2a2"/></svg><svg class="a" style="left:191.5px;top:10.5px" width="7" height="5" viewBox="0 0 7 5"><path d="M1,1 L3.5,3.6 L6,1" fill="none" stroke="#d0d0d0" stroke-width="1.3" stroke-linecap="round" stroke-linejoin="round"/></svg><svg class="a" style="left:600px;top:7.2px" width="6" height="8" viewBox="0 0 6 8"><path d="M4.6,1 L1.4,4 L4.6,7" fill="none" stroke="#9a9a9a" stroke-width="1.2" stroke-linecap="round" stroke-linejoin="round"/></svg><div class="a" style="left:664.5px;top:4.5px;font-size:10.4px;line-height:12px;color:#dcdcdc">Untitled</div></div>
<div id="ruler">
<div class="mt" style="left:168.2px"></div><div class="mt" style="left:174.3px"></div><div class="mt" style="left:180.5px"></div><div class="mt" style="left:186.6px"></div><div class="mt" style="left:192.8px"></div><div class="mt" style="left:198.9px"></div><div class="tick" style="left:112.7px"></div><div class="tc" style="left:120.6px">00:00:00:00</div>
<div class="mt" style="left:260.5px"></div><div class="mt" style="left:266.6px"></div><div class="mt" style="left:272.8px"></div><div class="mt" style="left:278.9px"></div><div class="mt" style="left:285.1px"></div><div class="mt" style="left:291.2px"></div><div class="tick" style="left:205.0px"></div><div class="tc" style="left:212.9px">00:00:15:00</div>
<div class="mt" style="left:352.8px"></div><div class="mt" style="left:358.9px"></div><div class="mt" style="left:365.1px"></div><div class="mt" style="left:371.2px"></div><div class="mt" style="left:377.4px"></div><div class="mt" style="left:383.5px"></div><div class="tick" style="left:297.3px"></div><div class="tc" style="left:305.2px">00:00:30:00</div>
<div class="mt" style="left:445.1px"></div><div class="mt" style="left:451.2px"></div><div class="mt" style="left:457.4px"></div><div class="mt" style="left:463.5px"></div><div class="mt" style="left:469.7px"></div><div class="mt" style="left:475.8px"></div><div class="tick" style="left:389.6px"></div><div class="tc" style="left:397.5px">00:00:45:00</div>
<div class="mt" style="left:537.4px"></div><div class="mt" style="left:543.5px"></div><div class="mt" style="left:549.7px"></div><div class="mt" style="left:555.8px"></div><div class="mt" style="left:562.0px"></div><div class="mt" style="left:568.1px"></div><div class="tick" style="left:481.9px"></div><div class="tc" style="left:489.8px">00:01:00:00</div>
<div class="mt" style="left:629.7px"></div><div class="mt" style="left:635.8px"></div><div class="mt" style="left:642.0px"></div><div class="mt" style="left:648.1px"></div><div class="mt" style="left:654.3px"></div><div class="mt" style="left:660.4px"></div><div class="tick" style="left:574.2px"></div><div class="tc" style="left:582.1px">00:01:15:00</div>
<div class="mt" style="left:722.0px"></div><div class="mt" style="left:728.1px"></div><div class="mt" style="left:734.3px"></div><div class="mt" style="left:740.4px"></div><div class="mt" style="left:746.6px"></div><div class="mt" style="left:752.7px"></div><div class="tick" style="left:666.5px"></div><div class="tc" style="left:674.4px">00:01:30:00</div>
</div>
<div id="clips">
<div class="clip" style="left:113.3px;top:498.3px;width:58.9px;height:53px;background:#1a6634;box-shadow:inset 0 0 0 .6px #124a26"><div class="t" style="left:2px;color:#86e898">Extended inter…</div><div class="thumb" style="background:#124a26"><div class="a" style="left:0.0px;top:0;width:39.2px;height:28.3px;overflow:hidden"><svg class="a" style="left:0;top:0" width="39.6" height="28.3"><use href="#fW" width="39.6" height="28.3"/></svg></div><div class="a" style="left:39.6px;top:0;width:16.5px;height:28.3px;overflow:hidden"><svg class="a" style="left:0;top:0" width="16.9" height="28.3"><use href="#fN" width="16.9" height="28.3"/></svg></div></div><div class="wave" style="background:#1b6d38"><div class="a" style="left:0;right:0;top:4px;height:1px;background:#1a6634;opacity:.8"></div><svg class="a" style="left:0;bottom:0" width="58.9" height="14" viewBox="0 0 58.9 14" preserveAspectRatio="none"><path d="M0,14 L0.0,12.1 L1.1,11.5 L2.2,11.5 L3.3,11.3 L4.4,8.1 L5.6,11.7 L6.7,12.1 L7.8,11.6 L8.9,11.0 L10.0,8.6 L11.1,11.1 L12.2,11.5 L13.3,12.0 L14.4,11.8 L15.6,11.9 L16.7,12.0 L17.8,8.3 L18.9,11.7 L20.0,11.9 L21.1,11.3 L22.2,11.5 L23.3,11.2 L24.4,11.4 L25.6,11.2 L26.7,11.2 L27.8,10.8 L28.9,8.5 L30.0,10.8 L31.1,11.4 L32.2,11.2 L33.3,11.4 L34.5,11.4 L35.6,11.3 L36.7,9.3 L37.8,11.1 L38.9,11.1 L40.0,11.6 L41.1,11.0 L42.2,11.1 L43.3,11.5 L44.5,10.9 L45.6,11.2 L46.7,11.2 L47.8,11.8 L48.9,11.3 L50.0,11.0 L51.1,11.2 L52.2,7.6 L53.3,11.3 L54.5,11.3 L55.6,11.5 L56.7,11.4 L57.8,11.3 L58.9,11.8 L58.9,14 Z" fill="#4ea667"/></svg></div></div>
<div class="clip" style="left:172.8px;top:498.3px;width:95.2px;height:53px;background:#1c776f;box-shadow:inset 0 0 0 .6px #165a55"><div class="t" style="left:2px;color:#aaf0e8">Extended interview: Mich…</div><div class="thumb" style="background:#165a55"><div class="a" style="left:0.0px;top:0;width:31.5px;height:28.3px;overflow:hidden"><svg class="a" style="left:0;top:0" width="31.9" height="28.3"><use href="#fW" width="31.9" height="28.3"/></svg></div><div class="a" style="left:31.9px;top:0;width:49.5px;height:28.3px;overflow:hidden"><svg class="a" style="left:0;top:0" width="49.9" height="28.3"><use href="#fE" width="49.9" height="28.3"/></svg></div><div class="a" style="left:81.8px;top:0;width:10.6px;height:28.3px;overflow:hidden"><svg class="a" style="left:0;top:0" width="11.0" height="28.3"><use href="#fK" width="11.0" height="28.3"/></svg></div></div><div class="wave" style="background:#20857d"><div class="a" style="left:0;right:0;top:4px;height:1px;background:#1c776f;opacity:.8"></div><svg class="a" style="left:0;bottom:0" width="95.2" height="14" viewBox="0 0 95.2 14" preserveAspectRatio="none"><path d="M0,14 L0.0,10.1 L1.1,5.0 L2.2,10.4 L3.3,10.8 L4.4,10.4 L5.5,11.1 L6.6,11.0 L7.7,9.8 L8.9,10.0 L10.0,7.2 L11.1,10.6 L12.2,10.8 L13.3,10.6 L14.4,6.6 L15.5,11.5 L16.6,10.1 L17.7,10.8 L18.8,10.1 L19.9,9.5 L21.0,9.3 L22.1,8.8 L23.2,10.1 L24.4,9.8 L25.5,10.0 L26.6,9.4 L27.7,9.2 L28.8,8.9 L29.9,9.6 L31.0,9.1 L32.1,9.7 L33.2,10.3 L34.3,11.0 L35.4,11.2 L36.5,11.3 L37.6,10.5 L38.7,10.5 L39.9,10.3 L41.0,10.9 L42.1,9.9 L43.2,10.9 L44.3,10.3 L45.4,10.9 L46.5,11.6 L47.6,11.5 L48.7,10.4 L49.8,10.4 L50.9,10.9 L52.0,10.0 L53.1,5.2 L54.2,10.6 L55.3,11.3 L56.5,11.9 L57.6,12.2 L58.7,10.9 L59.8,11.3 L60.9,4.6 L62.0,7.1 L63.1,10.9 L64.2,11.4 L65.3,11.9 L66.4,10.8 L67.5,9.9 L68.6,9.4 L69.7,9.9 L70.8,9.8 L72.0,10.8 L73.1,9.9 L74.2,10.0 L75.3,10.1 L76.4,9.4 L77.5,9.6 L78.6,10.8 L79.7,7.9 L80.8,6.2 L81.9,11.1 L83.0,10.0 L84.1,10.7 L85.2,11.1 L86.3,10.6 L87.5,10.1 L88.6,10.4 L89.7,6.7 L90.8,11.7 L91.9,7.8 L93.0,11.7 L94.1,11.1 L95.2,11.2 L95.2,14 Z" fill="#62bfb5"/></svg></div></div>
<div class="clip" style="left:269.5px;top:498.3px;width:68.5px;height:53px;background:#25416e;box-shadow:inset 0 0 0 .6px #1b3258"><div class="t" style="left:2px;color:#c6d9f6">Extended intervie…</div><div class="thumb" style="background:#1b3258"><div class="a" style="left:0.0px;top:0;width:33.1px;height:28.3px;overflow:hidden"><svg class="a" style="left:0;top:0" width="33.5" height="28.3"><use href="#fH" width="33.5" height="28.3"/></svg></div><div class="a" style="left:33.5px;top:0;width:32.2px;height:28.3px;overflow:hidden"><svg class="a" style="left:0;top:0" width="32.6" height="28.3"><use href="#fC" width="32.6" height="28.3"/></svg></div></div><div class="wave" style="background:#274678"><div class="a" style="left:0;right:0;top:4px;height:1px;background:#25416e;opacity:.8"></div><svg class="a" style="left:0;bottom:0" width="68.5" height="14" viewBox="0 0 68.5 14" preserveAspectRatio="none"><path d="M0,14 L0.0,12.0 L1.1,11.9 L2.2,9.5 L3.3,11.1 L4.4,11.5 L5.5,11.5 L6.6,11.5 L7.7,11.8 L8.8,11.2 L9.9,11.0 L11.0,11.7 L12.2,11.4 L13.3,11.9 L14.4,11.7 L15.5,11.2 L16.6,10.8 L17.7,10.7 L18.8,10.5 L19.9,11.3 L21.0,11.6 L22.1,11.6 L23.2,11.7 L24.3,11.7 L25.4,11.5 L26.5,11.0 L27.6,10.7 L28.7,10.4 L29.8,11.2 L30.9,10.7 L32.0,10.9 L33.1,11.4 L34.2,11.3 L35.4,11.8 L36.5,7.5 L37.6,11.3 L38.7,11.6 L39.8,7.8 L40.9,11.7 L42.0,11.8 L43.1,11.1 L44.2,10.6 L45.3,11.4 L46.4,11.9 L47.5,11.8 L48.6,8.3 L49.7,12.0 L50.8,11.3 L51.9,11.4 L53.0,11.2 L54.1,11.2 L55.2,10.8 L56.3,11.1 L57.5,11.5 L58.6,10.9 L59.7,8.2 L60.8,7.9 L61.9,7.8 L63.0,11.2 L64.1,11.4 L65.2,9.0 L66.3,11.0 L67.4,11.5 L68.5,11.3 L68.5,14 Z" fill="#7f93b9"/></svg></div></div>
<div class="clip" style="left:339.2px;top:498.3px;width:66.8px;height:53px;background:#25416e;box-shadow:inset 0 0 0 .6px #1b3258"><div class="t" style="left:2px;color:#c6d9f6">Extended intervi…</div><div class="thumb" style="background:#1b3258"><div class="a" style="left:0.0px;top:0;width:64.0px;height:28.3px;overflow:hidden"><svg class="a" style="left:0;top:0" width="64.4" height="28.3"><use href="#fE2" width="64.4" height="28.3"/></svg></div></div><div class="wave" style="background:#274678"><div class="a" style="left:0;right:0;top:4px;height:1px;background:#25416e;opacity:.8"></div><svg class="a" style="left:0;bottom:0" width="66.8" height="14" viewBox="0 0 66.8 14" preserveAspectRatio="none"><path d="M0,14 L0.0,11.6 L1.1,11.4 L2.2,11.9 L3.3,10.7 L4.5,10.2 L5.6,10.3 L6.7,11.0 L7.8,11.4 L8.9,10.5 L10.0,10.1 L11.1,10.6 L12.2,10.2 L13.4,5.0 L14.5,9.8 L15.6,10.7 L16.7,11.4 L17.8,10.5 L18.9,10.9 L20.0,10.7 L21.2,10.1 L22.3,10.5 L23.4,10.7 L24.5,11.0 L25.6,6.8 L26.7,11.6 L27.8,11.3 L28.9,10.2 L30.1,10.5 L31.2,10.4 L32.3,10.7 L33.4,11.0 L34.5,10.2 L35.6,11.1 L36.7,10.5 L37.9,11.0 L39.0,11.4 L40.1,11.9 L41.2,10.7 L42.3,10.3 L43.4,11.3 L44.5,10.2 L45.6,10.6 L46.8,10.4 L47.9,10.9 L49.0,10.9 L50.1,11.0 L51.2,8.0 L52.3,11.5 L53.4,11.4 L54.6,11.8 L55.7,11.5 L56.8,8.4 L57.9,11.1 L59.0,11.7 L60.1,11.7 L61.2,11.9 L62.3,11.0 L63.5,10.0 L64.6,10.7 L65.7,11.5 L66.8,11.6 L66.8,14 Z" fill="#7f93b9"/></svg></div></div>
<div class="clip" style="left:407.3px;top:498.3px;width:95.7px;height:53px;background:#25416e;box-shadow:inset 0 0 0 .6px #1b3258"><svg class="a" style="left:2.6px;top:2.2px" width="7.5" height="7" viewBox="0 0 8 7.5"><rect x="0.3" y="0.3" width="5.2" height="3.6" rx="0.6" fill="#e4ecf8"/><rect x="2" y="2.8" width="5.8" height="4.4" rx="0.6" fill="#e4ecf8" stroke="#27477c" stroke-width=".7"/></svg><div class="t" style="left:11.5px;color:#c6d9f6">Untitled Project Clip 1</div><div class="thumb" style="background:#1b3258"><div class="a" style="left:0.0px;top:0;width:46.2px;height:28.3px;overflow:hidden"><svg class="a" style="left:0;top:0" width="46.6" height="28.3"><use href="#fE" width="46.6" height="28.3"/></svg></div><div class="a" style="left:46.6px;top:0;width:46.2px;height:28.3px;overflow:hidden"><svg class="a" style="left:0;top:0" width="46.6" height="28.3"><use href="#fE" width="46.6" height="28.3"/></svg></div></div><div class="wave" style="background:#274678"><div class="a" style="left:0;right:0;top:4px;height:1px;background:#25416e;opacity:.8"></div><svg class="a" style="left:0;bottom:0" width="95.7" height="14" viewBox="0 0 95.7 14" preserveAspectRatio="none"><path d="M0,14 L0.0,10.1 L1.1,9.2 L2.2,8.8 L3.3,10.4 L4.5,9.0 L5.6,8.3 L6.7,8.9 L7.8,9.1 L8.9,10.6 L10.0,10.8 L11.1,9.7 L12.2,9.0 L13.4,9.0 L14.5,10.5 L15.6,10.9 L16.7,9.2 L17.8,9.9 L18.9,9.8 L20.0,10.5 L21.1,9.7 L22.3,8.7 L23.4,9.5 L24.5,4.8 L25.6,3.3 L26.7,10.2 L27.8,9.2 L28.9,9.9 L30.0,3.3 L31.2,10.6 L32.3,3.3 L33.4,9.9 L34.5,5.9 L35.6,9.4 L36.7,8.9 L37.8,8.1 L38.9,9.1 L40.1,8.7 L41.2,8.5 L42.3,3.3 L43.4,9.7 L44.5,9.5 L45.6,10.0 L46.7,9.7 L47.8,10.2 L49.0,11.0 L50.1,10.0 L51.2,3.3 L52.3,10.2 L53.4,10.7 L54.5,9.5 L55.6,3.3 L56.8,10.9 L57.9,9.6 L59.0,9.1 L60.1,9.0 L61.2,10.3 L62.3,10.9 L63.4,10.9 L64.5,9.2 L65.7,8.2 L66.8,8.9 L67.9,9.3 L69.0,9.7 L70.1,10.0 L71.2,8.7 L72.3,9.1 L73.4,10.4 L74.6,9.4 L75.7,9.9 L76.8,9.1 L77.9,9.0 L79.0,9.6 L80.1,10.2 L81.2,9.3 L82.3,10.0 L83.5,9.5 L84.6,10.8 L85.7,11.0 L86.8,10.6 L87.9,9.9 L89.0,10.2 L90.1,9.4 L91.2,9.9 L92.4,8.9 L93.5,8.1 L94.6,8.7 L95.7,9.9 L95.7,14 Z" fill="#7f93b9"/></svg></div></div>
<div class="clip" style="left:504.3px;top:498.3px;width:79.5px;height:53px;background:#25416e;box-shadow:inset 0 0 0 .6px #1b3258"><div class="t" style="left:2px;color:#c6d9f6">Extended interview:…</div><div class="thumb" style="background:#1b3258"><div class="a" style="left:0.0px;top:0;width:52.3px;height:28.3px;overflow:hidden"><svg class="a" style="left:0;top:0" width="52.7" height="28.3"><use href="#fF" width="52.7" height="28.3"/></svg></div><div class="a" style="left:52.7px;top:0;width:24.0px;height:28.3px;overflow:hidden"><svg class="a" style="left:0;top:0" width="52.7" height="28.3"><use href="#fF" width="52.7" height="28.3"/></svg></div></div><div class="wave" style="background:#274678"><div class="a" style="left:0;right:0;top:4px;height:1px;background:#25416e;opacity:.8"></div><svg class="a" style="left:0;bottom:0" width="79.5" height="14" viewBox="0 0 79.5 14" preserveAspectRatio="none"><path d="M0,14 L0.0,9.0 L1.1,9.1 L2.2,10.6 L3.3,10.0 L4.4,10.0 L5.5,10.3 L6.6,9.1 L7.7,8.9 L8.8,9.9 L9.9,8.6 L11.0,7.8 L12.1,7.3 L13.2,9.2 L14.4,8.2 L15.5,9.7 L16.6,9.0 L17.7,7.7 L18.8,9.1 L19.9,9.5 L21.0,8.0 L22.1,8.0 L23.2,7.5 L24.3,9.5 L25.4,9.0 L26.5,3.3 L27.6,8.8 L28.7,8.4 L29.8,9.5 L30.9,10.4 L32.0,8.7 L33.1,10.3 L34.2,11.3 L35.3,9.1 L36.4,9.7 L37.5,9.7 L38.6,3.3 L39.7,7.6 L40.9,6.7 L42.0,6.2 L43.1,6.8 L44.2,7.8 L45.3,7.4 L46.4,8.1 L47.5,3.3 L48.6,9.6 L49.7,8.5 L50.8,10.1 L51.9,9.4 L53.0,10.0 L54.1,8.3 L55.2,8.8 L56.3,8.6 L57.4,8.8 L58.5,10.0 L59.6,10.2 L60.7,10.2 L61.8,8.3 L62.9,9.0 L64.0,9.5 L65.1,9.4 L66.2,7.9 L67.4,9.8 L68.5,3.3 L69.6,11.3 L70.7,10.8 L71.8,3.3 L72.9,7.6 L74.0,8.4 L75.1,7.7 L76.2,8.3 L77.3,9.0 L78.4,8.6 L79.5,9.9 L79.5,14 Z" fill="#7f93b9"/></svg></div></div>
<div class="clip" style="left:585.0px;top:498.3px;width:59.8px;height:53px;background:#25416e;box-shadow:inset 0 0 0 .6px #1b3258"><div class="t" style="left:2px;color:#c6d9f6">Extended inter…</div><div class="thumb" style="background:#1b3258"><div class="a" style="left:0.0px;top:0;width:57.0px;height:28.3px;overflow:hidden"><svg class="a" style="left:0;top:0" width="57.4" height="28.3"><use href="#fG" width="57.4" height="28.3"/></svg></div></div><div class="wave" style="background:#274678"><div class="a" style="left:0;right:0;top:4px;height:1px;background:#25416e;opacity:.8"></div><svg class="a" style="left:0;bottom:0" width="59.8" height="14" viewBox="0 0 59.8 14" preserveAspectRatio="none"><path d="M0,14 L0.0,11.2 L1.1,4.9 L2.2,5.1 L3.3,11.4 L4.4,6.6 L5.5,10.5 L6.6,10.9 L7.8,9.7 L8.9,10.1 L10.0,11.1 L11.1,11.2 L12.2,11.6 L13.3,10.4 L14.4,10.1 L15.5,10.4 L16.6,6.8 L17.7,10.4 L18.8,10.7 L19.9,10.6 L21.0,9.8 L22.1,10.5 L23.3,10.3 L24.4,9.8 L25.5,8.9 L26.6,9.6 L27.7,10.6 L28.8,11.4 L29.9,10.4 L31.0,9.5 L32.1,9.4 L33.2,9.5 L34.3,9.1 L35.4,9.6 L36.5,10.7 L37.7,10.2 L38.8,9.5 L39.9,10.0 L41.0,11.1 L42.1,11.4 L43.2,11.9 L44.3,12.0 L45.4,11.5 L46.5,11.8 L47.6,11.1 L48.7,10.1 L49.8,10.6 L50.9,10.7 L52.0,9.5 L53.2,10.5 L54.3,10.9 L55.4,10.4 L56.5,11.4 L57.6,11.2 L58.7,9.8 L59.8,9.9 L59.8,14 Z" fill="#7f93b9"/></svg></div></div>
<div class="a" style="left:646px;top:498.5px;width:95.5px;height:53px;background:#3c3c3c;border-radius:1.5px"></div>
<div class="clip" style="left:743.0px;top:498.3px;width:79.3px;height:53px;background:#25416e;box-shadow:inset 0 0 0 .6px #1b3258"><div class="t" style="left:2px;color:#c6d9f6">Extended interview:…</div><div class="thumb" style="background:#1b3258"><div class="a" style="left:0.0px;top:0;width:52.2px;height:28.3px;overflow:hidden"><svg class="a" style="left:0;top:0" width="52.6" height="28.3"><use href="#fF" width="52.6" height="28.3"/></svg></div><div class="a" style="left:52.6px;top:0;width:23.9px;height:28.3px;overflow:hidden"><svg class="a" style="left:0;top:0" width="52.6" height="28.3"><use href="#fF" width="52.6" height="28.3"/></svg></div></div><div class="wave" style="background:#274678"><div class="a" style="left:0;right:0;top:4px;height:1px;background:#25416e;opacity:.8"></div><svg class="a" style="left:0;bottom:0" width="79.3" height="14" viewBox="0 0 79.3 14" preserveAspectRatio="none"><path d="M0,14 L0.0,11.5 L1.1,11.8 L2.2,12.0 L3.3,10.4 L4.4,10.2 L5.5,10.4 L6.6,11.0 L7.7,11.5 L8.8,12.0 L9.9,11.5 L11.0,11.3 L12.1,11.4 L13.2,11.9 L14.3,11.5 L15.4,11.4 L16.5,11.0 L17.6,10.0 L18.7,4.4 L19.8,10.7 L20.9,9.7 L22.0,9.6 L23.1,10.3 L24.2,9.6 L25.3,3.8 L26.4,9.5 L27.5,9.2 L28.6,10.3 L29.7,10.3 L30.8,11.1 L31.9,10.8 L33.0,11.2 L34.1,11.8 L35.2,11.7 L36.3,11.4 L37.4,10.3 L38.5,10.5 L39.6,10.2 L40.8,10.8 L41.9,5.2 L43.0,11.1 L44.1,11.0 L45.2,10.9 L46.3,10.9 L47.4,7.5 L48.5,11.6 L49.6,11.4 L50.7,11.0 L51.8,6.5 L52.9,10.8 L54.0,10.5 L55.1,10.7 L56.2,11.6 L57.3,11.7 L58.4,12.1 L59.5,10.9 L60.6,10.6 L61.7,9.6 L62.8,10.7 L63.9,10.6 L65.0,11.2 L66.1,10.7 L67.2,11.3 L68.3,10.5 L69.4,10.5 L70.5,10.8 L71.6,11.2 L72.7,11.6 L73.8,10.8 L74.9,11.5 L76.0,4.7 L77.1,10.4 L78.2,10.0 L79.3,10.7 L79.3,14 Z" fill="#7f93b9"/></svg></div></div>
<div class="clip" style="left:823.3px;top:498.3px;width:60.0px;height:53px;background:#25416e;box-shadow:inset 0 0 0 .6px #1b3258"><div class="t" style="left:2px;color:#c6d9f6">Extended inter…</div><div class="thumb" style="background:#1b3258"><div class="a" style="left:0.0px;top:0;width:57.2px;height:28.3px;overflow:hidden"><svg class="a" style="left:0;top:0" width="57.6" height="28.3"><use href="#fG" width="57.6" height="28.3"/></svg></div></div><div class="wave" style="background:#274678"><div class="a" style="left:0;right:0;top:4px;height:1px;background:#25416e;opacity:.8"></div><svg class="a" style="left:0;bottom:0" width="60.0" height="14" viewBox="0 0 60.0 14" preserveAspectRatio="none"><path d="M0,14 L0.0,11.1 L1.1,11.5 L2.2,12.0 L3.3,5.4 L4.4,5.7 L5.6,10.0 L6.7,9.7 L7.8,10.5 L8.9,10.5 L10.0,10.3 L11.1,10.6 L12.2,11.3 L13.3,10.6 L14.4,6.5 L15.6,11.1 L16.7,10.3 L17.8,9.6 L18.9,10.8 L20.0,5.9 L21.1,9.8 L22.2,9.9 L23.3,9.9 L24.4,7.1 L25.6,6.9 L26.7,10.5 L27.8,10.6 L28.9,5.0 L30.0,11.0 L31.1,4.7 L32.2,9.9 L33.3,10.5 L34.4,9.6 L35.6,9.5 L36.7,10.4 L37.8,11.3 L38.9,10.6 L40.0,5.5 L41.1,9.5 L42.2,10.0 L43.3,9.2 L44.4,10.6 L45.6,10.9 L46.7,11.2 L47.8,5.8 L48.9,11.7 L50.0,12.1 L51.1,10.8 L52.2,10.3 L53.3,9.9 L54.4,10.6 L55.6,10.7 L56.7,9.9 L57.8,9.8 L58.9,9.4 L60.0,10.7 L60.0,14 Z" fill="#7f93b9"/></svg></div></div>
<div class="clip" style="left:645.3px;top:438.5px;width:96.7px;height:53px;background:#25416e;box-shadow:inset 0 0 0 .6px #1b3258"><svg class="a" style="left:2.6px;top:2.2px" width="7.5" height="7" viewBox="0 0 8 7.5"><rect x="0.3" y="0.3" width="5.2" height="3.6" rx="0.6" fill="#e4ecf8"/><rect x="2" y="2.8" width="5.8" height="4.4" rx="0.6" fill="#e4ecf8" stroke="#27477c" stroke-width=".7"/></svg><div class="t" style="left:11.5px;color:#c6d9f6">Untitled Project Clip 1</div><div class="thumb" style="background:#1b3258"><div class="a" style="left:0.0px;top:0;width:46.8px;height:28.3px;overflow:hidden"><svg class="a" style="left:0;top:0" width="47.2" height="28.3"><use href="#fE" width="47.2" height="28.3"/></svg></div><div class="a" style="left:47.2px;top:0;width:46.8px;height:28.3px;overflow:hidden"><svg class="a" style="left:0;top:0" width="47.2" height="28.3"><use href="#fE" width="47.2" height="28.3"/></svg></div></div><div class="wave" style="background:#274678"><div class="a" style="left:0;right:0;top:4px;height:1px;background:#25416e;opacity:.8"></div><svg class="a" style="left:0;bottom:0" width="96.7" height="14" viewBox="0 0 96.7 14" preserveAspectRatio="none"><path d="M0,14 L0.0,10.3 L1.1,9.9 L2.2,9.0 L3.3,8.9 L4.4,9.2 L5.6,10.0 L6.7,3.3 L7.8,8.8 L8.9,9.7 L10.0,9.8 L11.1,9.4 L12.2,8.9 L13.3,8.0 L14.4,4.9 L15.6,8.7 L16.7,9.4 L17.8,10.0 L18.9,3.3 L20.0,9.1 L21.1,10.0 L22.2,11.0 L23.3,9.7 L24.5,9.6 L25.6,10.5 L26.7,10.5 L27.8,11.1 L28.9,11.6 L30.0,10.1 L31.1,10.1 L32.2,10.6 L33.3,9.9 L34.5,10.8 L35.6,11.2 L36.7,9.8 L37.8,9.8 L38.9,3.3 L40.0,10.3 L41.1,11.1 L42.2,10.3 L43.3,9.2 L44.5,10.0 L45.6,8.9 L46.7,3.3 L47.8,9.4 L48.9,9.7 L50.0,9.6 L51.1,10.5 L52.2,9.0 L53.4,3.8 L54.5,6.5 L55.6,10.8 L56.7,10.4 L57.8,10.3 L58.9,10.2 L60.0,9.0 L61.1,9.5 L62.2,8.6 L63.4,9.7 L64.5,9.2 L65.6,9.2 L66.7,9.5 L67.8,8.4 L68.9,8.0 L70.0,3.3 L71.1,7.9 L72.2,7.4 L73.4,7.9 L74.5,8.4 L75.6,9.7 L76.7,10.7 L77.8,3.3 L78.9,9.6 L80.0,9.0 L81.1,9.2 L82.3,9.0 L83.4,9.9 L84.5,9.5 L85.6,10.3 L86.7,9.1 L87.8,3.3 L88.9,4.9 L90.0,10.2 L91.1,9.7 L92.3,9.2 L93.4,9.4 L94.5,9.7 L95.6,9.1 L96.7,9.5 L96.7,14 Z" fill="#7f93b9"/></svg></div></div>
<div class="clip" style="left:269.5px;top:558.0px;width:68.5px;height:53px;background:#1a6634;box-shadow:inset 0 0 0 .6px #124a26"><div class="t" style="left:2px;color:#86e898">Extended intervie…</div><div class="thumb" style="background:#124a26"><div class="a" style="left:0.0px;top:0;width:33.1px;height:28.3px;overflow:hidden"><svg class="a" style="left:0;top:0" width="33.5" height="28.3"><use href="#fH" width="33.5" height="28.3"/></svg></div><div class="a" style="left:33.5px;top:0;width:32.2px;height:28.3px;overflow:hidden"><svg class="a" style="left:0;top:0" width="32.6" height="28.3"><use href="#fC" width="32.6" height="28.3"/></svg></div></div><div class="wave" style="background:#1b6d38"><div class="a" style="left:0;right:0;top:4px;height:1px;background:#1a6634;opacity:.8"></div><svg class="a" style="left:0;bottom:0" width="68.5" height="14" viewBox="0 0 68.5 14" preserveAspectRatio="none"><path d="M0,14 L0.0,11.6 L1.1,10.9 L2.2,11.0 L3.3,11.4 L4.4,11.2 L5.5,11.7 L6.6,12.0 L7.7,6.8 L8.8,10.7 L9.9,10.7 L11.0,11.5 L12.2,12.0 L13.3,8.6 L14.4,11.7 L15.5,11.5 L16.6,11.3 L17.7,11.3 L18.8,10.6 L19.9,10.4 L21.0,10.9 L22.1,7.2 L23.2,11.4 L24.3,11.4 L25.4,8.0 L26.5,10.4 L27.6,10.1 L28.7,11.1 L29.8,10.7 L30.9,11.4 L32.0,10.7 L33.1,11.4 L34.2,7.6 L35.4,12.0 L36.5,11.7 L37.6,11.2 L38.7,11.0 L39.8,11.1 L40.9,11.4 L42.0,10.9 L43.1,10.5 L44.2,10.9 L45.3,10.8 L46.4,10.3 L47.5,10.9 L48.6,11.3 L49.7,8.1 L50.8,11.9 L51.9,11.7 L53.0,10.9 L54.1,10.9 L55.2,11.4 L56.3,10.8 L57.5,11.2 L58.6,10.9 L59.7,11.4 L60.8,10.8 L61.9,11.0 L63.0,11.7 L64.1,11.8 L65.2,11.9 L66.3,11.4 L67.4,11.8 L68.5,12.1 L68.5,14 Z" fill="#4ea667"/></svg></div></div>
<div class="a" style="left:172.2px;top:499px;width:0;height:51px;border-left:1.4px dotted #0f3f24"></div><div class="a" style="left:645px;top:494px;width:1.5px;height:2.5px;background:#8aa4cc"></div><div class="a" style="left:269.2px;top:552.5px;width:1.6px;height:2px;background:#b0b0b0"></div></div>
<div id="mixer">
<div class="strip" style="left:8.5px;background:linear-gradient(180deg,#4a2a1a 0%,#4a2a1a 14%,#3a2318 45.6%,#2c1f1a 74%,#2a1e19 100%)"><div class="tb" style="left:5.5px;background:#6d5a4e;border-color:#5f9c7c"></div><div class="tb" style="left:35.5px;background:#6d5a4e;border-color:#d98a56"></div><div class="trk" style="top:104px;height:156px;background:#e98a4e;left:19.8px;width:3.2px"></div><div class="meter" style="background:rgba(0,0,0,.42)"><i style="top:5.72px;background:rgba(255,255,255,.085)"></i><i style="top:10.14px;background:rgba(255,255,255,.085)"></i><i style="top:14.56px;background:rgba(255,255,255,.085)"></i><i style="top:18.98px;background:rgba(255,255,255,.085)"></i><i style="top:23.40px;background:rgba(255,255,255,.085)"></i><i style="top:27.82px;background:rgba(255,255,255,.085)"></i><i style="top:32.24px;background:rgba(255,255,255,.085)"></i><i style="top:36.66px;background:rgba(255,255,255,.085)"></i><i style="top:41.08px;background:rgba(255,255,255,.085)"></i><i style="top:45.50px;background:rgba(255,255,255,.085)"></i><i style="top:49.92px;background:rgba(255,255,255,.085)"></i><i style="top:54.34px;background:rgba(255,255,255,.085)"></i><i style="top:58.76px;background:rgba(255,255,255,.085)"></i><i style="top:63.18px;background:rgba(255,255,255,.085)"></i><i style="top:67.60px;background:rgba(255,255,255,.085)"></i><i style="top:72.02px;background:rgba(255,255,255,.085)"></i><i style="top:76.44px;background:rgba(255,255,255,.085)"></i><i style="top:80.86px;background:rgba(255,255,255,.085)"></i><i style="top:85.28px;background:rgba(255,255,255,.085)"></i><i style="top:89.70px;background:rgba(255,255,255,.085)"></i><i style="top:94.12px;background:rgba(255,255,255,.085)"></i><i style="top:98.54px;background:#f0935a"></i><i style="top:102.96px;background:#f0935a"></i><i style="top:107.38px;background:#f0935a"></i><i style="top:111.80px;background:#f0935a"></i><i style="top:116.22px;background:#f0935a"></i><i style="top:120.64px;background:#f0935a"></i><i style="top:125.06px;background:#f0935a"></i><i style="top:129.48px;background:#f0935a"></i><i style="top:133.90px;background:#f0935a"></i><i style="top:138.32px;background:#f0935a"></i><i style="top:142.74px;background:#f0935a"></i><i style="top:147.16px;background:#f0935a"></i><i style="top:151.58px;background:#f0935a"></i><i style="top:156.00px;background:#f0935a"></i><i style="top:160.42px;background:#f0935a"></i><i style="top:164.84px;background:#f0935a"></i><i style="top:169.26px;background:#f0935a"></i><i style="top:173.68px;background:#f0935a"></i><i style="top:178.10px;background:#f0935a"></i></div><div class="knob" style="top:76px"><b style="background:#e98a4e"></b></div><svg class="a" style="left:26px;top:345.5px" width="12" height="10" viewBox="0 0 12 10"><path d="M0.6,3.4 H2.4 L5.4,0.9 V9.1 L2.4,6.6 H0.6 Z" fill="#e98a4e"/><path d="M7,3.2 Q8.3,5 7,6.8" fill="none" stroke="#e98a4e" stroke-width="1" stroke-linecap="round"/><path d="M8.7,1.9 Q10.9,5 8.7,8.1" fill="none" stroke="#e98a4e" stroke-width="1" stroke-linecap="round" opacity=".7"/></svg><div class="sl" style="color:#e98a4e">Master</div><div class="pill"><span>Playback</span></div></div>
<div class="strip" style="left:82.5px;background:linear-gradient(180deg,#464127 0%,#464127 14%,#3c3a26 45.6%,#2c2b24 74%,#292823 100%)"><div class="tb" style="left:5.5px;background:#5c5638;border-color:#625c3c"></div><div class="tb" style="left:35.5px;background:#5c5638;border-color:#625c3c"></div><div class="trk" style="top:82px;height:40px;background:#161614;left:19.2px;width:4.4px;border-radius:2.2px"></div><div class="trk" style="top:148px;height:112px;background:#8d93ab;left:19.8px;width:3.2px"></div><div class="meter" style="background:rgba(0,0,0,.42)"><i style="top:5.72px;background:rgba(255,255,255,.085)"></i><i style="top:10.14px;background:rgba(255,255,255,.085)"></i><i style="top:14.56px;background:rgba(255,255,255,.085)"></i><i style="top:18.98px;background:rgba(255,255,255,.085)"></i><i style="top:23.40px;background:rgba(255,255,255,.085)"></i><i style="top:27.82px;background:rgba(255,255,255,.085)"></i><i style="top:32.24px;background:rgba(255,255,255,.085)"></i><i style="top:36.66px;background:rgba(255,255,255,.085)"></i><i style="top:41.08px;background:rgba(255,255,255,.085)"></i><i style="top:45.50px;background:rgba(255,255,255,.085)"></i><i style="top:49.92px;background:rgba(255,255,255,.085)"></i><i style="top:54.34px;background:rgba(255,255,255,.085)"></i><i style="top:58.76px;background:rgba(255,255,255,.085)"></i><i style="top:63.18px;background:rgba(255,255,255,.085)"></i><i style="top:67.60px;background:rgba(255,255,255,.085)"></i><i style="top:72.02px;background:rgba(255,255,255,.085)"></i><i style="top:76.44px;background:rgba(255,255,255,.085)"></i><i style="top:80.86px;background:rgba(255,255,255,.085)"></i><i style="top:85.28px;background:rgba(255,255,255,.085)"></i><i style="top:89.70px;background:rgba(255,255,255,.085)"></i><i style="top:94.12px;background:rgba(255,255,255,.085)"></i><i style="top:98.54px;background:rgba(255,255,255,.085)"></i><i style="top:102.96px;background:rgba(255,255,255,.085)"></i><i style="top:107.38px;background:rgba(255,255,255,.085)"></i><i style="top:111.80px;background:rgba(255,255,255,.085)"></i><i style="top:116.22px;background:rgba(255,255,255,.085)"></i><i style="top:120.64px;background:rgba(255,255,255,.085)"></i><i style="top:125.06px;background:rgba(255,255,255,.085)"></i><i style="top:129.48px;background:rgba(255,255,255,.085)"></i><i style="top:133.90px;background:rgba(255,255,255,.085)"></i><i style="top:138.32px;background:rgba(255,255,255,.085)"></i><i style="top:142.74px;background:rgba(255,255,255,.085)"></i><i style="top:147.16px;background:rgba(255,255,255,.085)"></i><i style="top:151.58px;background:rgba(255,255,255,.085)"></i><i style="top:156.00px;background:rgba(255,255,255,.085)"></i><i style="top:160.42px;background:rgba(255,255,255,.085)"></i><i style="top:164.84px;background:rgba(255,255,255,.085)"></i><i style="top:169.26px;background:rgba(255,255,255,.085)"></i><i style="top:173.68px;background:rgba(255,255,255,.085)"></i><i style="top:178.10px;background:rgba(255,255,255,.085)"></i></div><div class="knob" style="top:120px"><b style="background:#a9b4d6"></b></div><svg class="a" style="left:26px;top:345.5px" width="12" height="10" viewBox="0 0 12 10"><path d="M0.6,3.4 H2.4 L5.4,0.9 V9.1 L2.4,6.6 H0.6 Z" fill="#c6cadb"/><path d="M7,3.2 Q8.3,5 7,6.8" fill="none" stroke="#c6cadb" stroke-width="1" stroke-linecap="round"/><path d="M8.7,1.9 Q10.9,5 8.7,8.1" fill="none" stroke="#c6cadb" stroke-width="1" stroke-linecap="round" opacity=".7"/></svg><div class="sl" style="color:#c6cadb">Dialogue-1</div><div class="pill"><span>Extended</span></div></div>
<div class="strip" style="left:148.5px;background:linear-gradient(180deg,#464127 0%,#464127 14%,#3c3a26 45.6%,#2c2b24 74%,#292823 100%)"><div class="tb" style="left:5.5px;background:#5c5638;border-color:#625c3c"></div><div class="tb" style="left:35.5px;background:#5c5638;border-color:#625c3c"></div><div class="trk" style="top:82px;height:13.5px;background:#161614;left:19.2px;width:4.4px;border-radius:2.2px"></div><div class="trk" style="top:121.5px;height:138.5px;background:#8d93ab;left:19.8px;width:3.2px"></div><div class="meter" style="background:rgba(0,0,0,.42)"><i style="top:5.72px;background:rgba(255,255,255,.085)"></i><i style="top:10.14px;background:rgba(255,255,255,.085)"></i><i style="top:14.56px;background:rgba(255,255,255,.085)"></i><i style="top:18.98px;background:rgba(255,255,255,.085)"></i><i style="top:23.40px;background:rgba(255,255,255,.085)"></i><i style="top:27.82px;background:rgba(255,255,255,.085)"></i><i style="top:32.24px;background:rgba(255,255,255,.085)"></i><i style="top:36.66px;background:rgba(255,255,255,.085)"></i><i style="top:41.08px;background:rgba(255,255,255,.085)"></i><i style="top:45.50px;background:rgba(255,255,255,.085)"></i><i style="top:49.92px;background:rgba(255,255,255,.085)"></i><i style="top:54.34px;background:rgba(255,255,255,.085)"></i><i style="top:58.76px;background:rgba(255,255,255,.085)"></i><i style="top:63.18px;background:rgba(255,255,255,.085)"></i><i style="top:67.60px;background:rgba(255,255,255,.085)"></i><i style="top:72.02px;background:rgba(255,255,255,.085)"></i><i style="top:76.44px;background:rgba(255,255,255,.085)"></i><i style="top:80.86px;background:rgba(255,255,255,.085)"></i><i style="top:85.28px;background:rgba(255,255,255,.085)"></i><i style="top:89.70px;background:rgba(255,255,255,.085)"></i><i style="top:94.12px;background:rgba(255,255,255,.085)"></i><i style="top:98.54px;background:rgba(255,255,255,.085)"></i><i style="top:102.96px;background:rgba(255,255,255,.085)"></i><i style="top:107.38px;background:rgba(255,255,255,.085)"></i><i style="top:111.80px;background:rgba(255,255,255,.085)"></i><i style="top:116.22px;background:rgba(255,255,255,.085)"></i><i style="top:120.64px;background:rgba(255,255,255,.085)"></i><i style="top:125.06px;background:rgba(255,255,255,.085)"></i><i style="top:129.48px;background:rgba(255,255,255,.085)"></i><i style="top:133.90px;background:rgba(255,255,255,.085)"></i><i style="top:138.32px;background:rgba(255,255,255,.085)"></i><i style="top:142.74px;background:rgba(255,255,255,.085)"></i><i style="top:147.16px;background:rgba(255,255,255,.085)"></i><i style="top:151.58px;background:rgba(255,255,255,.085)"></i><i style="top:156.00px;background:rgba(255,255,255,.085)"></i><i style="top:160.42px;background:rgba(255,255,255,.085)"></i><i style="top:164.84px;background:rgba(255,255,255,.085)"></i><i style="top:169.26px;background:rgba(255,255,255,.085)"></i><i style="top:173.68px;background:rgba(255,255,255,.085)"></i><i style="top:178.10px;background:rgba(255,255,255,.085)"></i></div><div class="knob" style="top:93.5px"><b style="background:#a9b4d6"></b></div><svg class="a" style="left:26px;top:345.5px" width="12" height="10" viewBox="0 0 12 10"><path d="M0.6,3.4 H2.4 L5.4,0.9 V9.1 L2.4,6.6 H0.6 Z" fill="#c6cadb"/><path d="M7,3.2 Q8.3,5 7,6.8" fill="none" stroke="#c6cadb" stroke-width="1" stroke-linecap="round"/><path d="M8.7,1.9 Q10.9,5 8.7,8.1" fill="none" stroke="#c6cadb" stroke-width="1" stroke-linecap="round" opacity=".7"/></svg><div class="sl" style="color:#c6cadb">Dialogue</div><div class="pill"><span>Untitled</span></div></div>
<div class="strip" style="left:214.5px;background:linear-gradient(180deg,#1c372c 0%,#1c372c 14%,#1d302a 45.6%,#1e2726 74%,#1d2625 100%)"><div class="tb" style="left:5.5px;background:#325646;border-color:#365c4b"></div><div class="tb" style="left:35.5px;background:#325646;border-color:#365c4b"></div><div class="trk" style="top:82px;height:39px;background:#161614;left:19.2px;width:4.4px;border-radius:2.2px"></div><div class="trk" style="top:147px;height:113px;background:#7fc9a4;left:19.8px;width:3.2px"></div><div class="meter" style="background:rgba(0,0,0,.42)"><i style="top:5.72px;background:rgba(255,255,255,.085)"></i><i style="top:10.14px;background:rgba(255,255,255,.085)"></i><i style="top:14.56px;background:rgba(255,255,255,.085)"></i><i style="top:18.98px;background:rgba(255,255,255,.085)"></i><i style="top:23.40px;background:rgba(255,255,255,.085)"></i><i style="top:27.82px;background:rgba(255,255,255,.085)"></i><i style="top:32.24px;background:rgba(255,255,255,.085)"></i><i style="top:36.66px;background:rgba(255,255,255,.085)"></i><i style="top:41.08px;background:rgba(255,255,255,.085)"></i><i style="top:45.50px;background:rgba(255,255,255,.085)"></i><i style="top:49.92px;background:rgba(255,255,255,.085)"></i><i style="top:54.34px;background:rgba(255,255,255,.085)"></i><i style="top:58.76px;background:rgba(255,255,255,.085)"></i><i style="top:63.18px;background:rgba(255,255,255,.085)"></i><i style="top:67.60px;background:rgba(255,255,255,.085)"></i><i style="top:72.02px;background:rgba(255,255,255,.085)"></i><i style="top:76.44px;background:rgba(255,255,255,.085)"></i><i style="top:80.86px;background:rgba(255,255,255,.085)"></i><i style="top:85.28px;background:rgba(255,255,255,.085)"></i><i style="top:89.70px;background:rgba(255,255,255,.085)"></i><i style="top:94.12px;background:rgba(255,255,255,.085)"></i><i style="top:98.54px;background:rgba(255,255,255,.085)"></i><i style="top:102.96px;background:rgba(255,255,255,.085)"></i><i style="top:107.38px;background:rgba(255,255,255,.085)"></i><i style="top:111.80px;background:rgba(255,255,255,.085)"></i><i style="top:116.22px;background:rgba(255,255,255,.085)"></i><i style="top:120.64px;background:rgba(255,255,255,.085)"></i><i style="top:125.06px;background:rgba(255,255,255,.085)"></i><i style="top:129.48px;background:rgba(255,255,255,.085)"></i><i style="top:133.90px;background:rgba(255,255,255,.085)"></i><i style="top:138.32px;background:rgba(255,255,255,.085)"></i><i style="top:142.74px;background:rgba(255,255,255,.085)"></i><i style="top:147.16px;background:rgba(255,255,255,.085)"></i><i style="top:151.58px;background:rgba(255,255,255,.085)"></i><i style="top:156.00px;background:rgba(255,255,255,.085)"></i><i style="top:160.42px;background:rgba(255,255,255,.085)"></i><i style="top:164.84px;background:rgba(255,255,255,.085)"></i><i style="top:169.26px;background:rgba(255,255,255,.085)"></i><i style="top:173.68px;background:rgba(255,255,255,.085)"></i><i style="top:178.10px;background:rgba(255,255,255,.085)"></i></div><div class="knob" style="top:119px"><b style="background:#7fe6a6"></b></div><svg class="a" style="left:27.5px;top:344.5px" width="9" height="12" viewBox="0 0 9 12"><path d="M4.9,9.6 V1.2 Q5.4,3 7.9,3.4 Q8.2,4.6 7.4,5.8" fill="none" stroke="#8ff0ac" stroke-width="1.3" stroke-linejoin="round" stroke-linecap="round"/><path d="M4.9,1.2 L7.9,1.9 V3.6 L4.9,3 Z" fill="#8ff0ac"/><ellipse cx="3.1" cy="9.7" rx="2.2" ry="1.7" fill="#8ff0ac" transform="rotate(-18 3.1 9.7)"/></svg><div class="sl" style="color:#8ff0ac">Music-1</div><div class="pill"><span>Extended</span></div></div>
<div class="strip hl" style="left:280.5px;background:linear-gradient(180deg,#2f243d 0%,#2f243d 14%,#2a2338 45.6%,#23212c 74%,#22202a 100%)"><div class="tb" style="left:5.5px;background:#5a4a6c;border-color:#6cb8c4"></div><div class="tb" style="left:35.5px;background:#503e60;border-color:#574468"></div><div class="trk" style="top:104px;height:156px;background:#8fe9e0;left:19.8px;width:3.2px"></div><div class="meter" style="background:rgba(0,0,0,.42)"><i style="top:5.72px;background:rgba(255,255,255,.085)"></i><i style="top:10.14px;background:rgba(255,255,255,.085)"></i><i style="top:14.56px;background:rgba(255,255,255,.085)"></i><i style="top:18.98px;background:rgba(255,255,255,.085)"></i><i style="top:23.40px;background:rgba(255,255,255,.085)"></i><i style="top:27.82px;background:rgba(255,255,255,.085)"></i><i style="top:32.24px;background:rgba(255,255,255,.085)"></i><i style="top:36.66px;background:rgba(255,255,255,.085)"></i><i style="top:41.08px;background:rgba(255,255,255,.085)"></i><i style="top:45.50px;background:rgba(255,255,255,.085)"></i><i style="top:49.92px;background:rgba(255,255,255,.085)"></i><i style="top:54.34px;background:rgba(255,255,255,.085)"></i><i style="top:58.76px;background:rgba(255,255,255,.085)"></i><i style="top:63.18px;background:rgba(255,255,255,.085)"></i><i style="top:67.60px;background:rgba(255,255,255,.085)"></i><i style="top:72.02px;background:rgba(255,255,255,.085)"></i><i style="top:76.44px;background:rgba(255,255,255,.085)"></i><i style="top:80.86px;background:rgba(255,255,255,.085)"></i><i style="top:85.28px;background:rgba(255,255,255,.085)"></i><i style="top:89.70px;background:rgba(255,255,255,.085)"></i><i style="top:94.12px;background:rgba(255,255,255,.085)"></i><i style="top:98.54px;background:#8fe9e0"></i><i style="top:102.96px;background:#8fe9e0"></i><i style="top:107.38px;background:#8fe9e0"></i><i style="top:111.80px;background:#8fe9e0"></i><i style="top:116.22px;background:#8fe9e0"></i><i style="top:120.64px;background:#8fe9e0"></i><i style="top:125.06px;background:#8fe9e0"></i><i style="top:129.48px;background:#8fe9e0"></i><i style="top:133.90px;background:#8fe9e0"></i><i style="top:138.32px;background:#8fe9e0"></i><i style="top:142.74px;background:#8fe9e0"></i><i style="top:147.16px;background:#8fe9e0"></i><i style="top:151.58px;background:#8fe9e0"></i><i style="top:156.00px;background:#8fe9e0"></i><i style="top:160.42px;background:#8fe9e0"></i><i style="top:164.84px;background:#8fe9e0"></i><i style="top:169.26px;background:#8fe9e0"></i><i style="top:173.68px;background:#8fe9e0"></i><i style="top:178.10px;background:#8fe9e0"></i></div><div class="knob" style="top:76px"><b style="background:#8fe9e0"></b></div><svg class="a" style="left:26px;top:345px" width="12" height="11" viewBox="0 0 12 11"><g stroke="#a5f2ea" stroke-width="0.95" stroke-linecap="round"><path d="M0.8,4.50 V6.50"/><path d="M2.5,3.30 V7.70"/><path d="M4.2,1.20 V9.80"/><path d="M5.9,2.50 V8.50"/><path d="M7.6,0.70 V10.30"/><path d="M9.3,3.00 V8.00"/><path d="M11,4.30 V6.70"/></g></svg><div class="sl" style="color:#a5f2ea">Effects-1</div><div class="pill"><span>Extended</span></div></div>
<div class="strip" style="left:346.5px;background:linear-gradient(180deg,#333336 0%,#333336 14%,#2f2f32 45.6%,#2b2b2e 74%,#29292c 100%)"><div class="tb" style="left:5.5px;background:#464649;border-color:#4a4a4d"></div><div class="tb" style="left:35.5px;background:#464649;border-color:#4a4a4d"></div><div class="trk" style="top:83px;height:36px;background:#252527;left:19.3px;width:4.2px;border-radius:2px"></div><div class="trk" style="top:131px;height:129px;background:#59595c;left:19.9px;width:3px"></div><div class="meter" style="background:rgba(0,0,0,.32)"><i style="top:5.72px;background:rgba(255,255,255,.035)"></i><i style="top:10.14px;background:rgba(255,255,255,.035)"></i><i style="top:14.56px;background:rgba(255,255,255,.035)"></i><i style="top:18.98px;background:rgba(255,255,255,.035)"></i><i style="top:23.40px;background:rgba(255,255,255,.035)"></i><i style="top:27.82px;background:rgba(255,255,255,.035)"></i><i style="top:32.24px;background:rgba(255,255,255,.035)"></i><i style="top:36.66px;background:rgba(255,255,255,.035)"></i><i style="top:41.08px;background:rgba(255,255,255,.035)"></i><i style="top:45.50px;background:rgba(255,255,255,.035)"></i><i style="top:49.92px;background:rgba(255,255,255,.035)"></i><i style="top:54.34px;background:rgba(255,255,255,.035)"></i><i style="top:58.76px;background:rgba(255,255,255,.035)"></i><i style="top:63.18px;background:rgba(255,255,255,.035)"></i><i style="top:67.60px;background:rgba(255,255,255,.035)"></i><i style="top:72.02px;background:rgba(255,255,255,.035)"></i><i style="top:76.44px;background:rgba(255,255,255,.035)"></i><i style="top:80.86px;background:rgba(255,255,255,.035)"></i><i style="top:85.28px;background:rgba(255,255,255,.035)"></i><i style="top:89.70px;background:rgba(255,255,255,.035)"></i><i style="top:94.12px;background:rgba(255,255,255,.035)"></i><i style="top:98.54px;background:rgba(255,255,255,.035)"></i><i style="top:102.96px;background:rgba(255,255,255,.035)"></i><i style="top:107.38px;background:rgba(255,255,255,.035)"></i><i style="top:111.80px;background:rgba(255,255,255,.035)"></i><i style="top:116.22px;background:rgba(255,255,255,.035)"></i><i style="top:120.64px;background:rgba(255,255,255,.035)"></i><i style="top:125.06px;background:rgba(255,255,255,.035)"></i><i style="top:129.48px;background:rgba(255,255,255,.035)"></i><i style="top:133.90px;background:rgba(255,255,255,.035)"></i><i style="top:138.32px;background:rgba(255,255,255,.035)"></i><i style="top:142.74px;background:rgba(255,255,255,.035)"></i><i style="top:147.16px;background:rgba(255,255,255,.035)"></i><i style="top:151.58px;background:rgba(255,255,255,.035)"></i><i style="top:156.00px;background:rgba(255,255,255,.035)"></i><i style="top:160.42px;background:rgba(255,255,255,.035)"></i><i style="top:164.84px;background:rgba(255,255,255,.035)"></i><i style="top:169.26px;background:rgba(255,255,255,.035)"></i><i style="top:173.68px;background:rgba(255,255,255,.035)"></i><i style="top:178.10px;background:rgba(255,255,255,.035)"></i></div><div class="knob dimk" style="top:116px"><b style="background:#77777a"></b><u></u></div><svg class="a" style="left:26.5px;top:345.5px" width="11" height="10" viewBox="0 0 11 10"><g stroke="#555558" stroke-width="1.1" stroke-linecap="round"><path d="M1,2 H10"/><path d="M1,5 H10"/><path d="M1,8 H10"/></g><g fill="#555558"><circle cx="7" cy="2" r="1.3"/><circle cx="3.6" cy="5" r="1.3"/><circle cx="6.4" cy="8" r="1.3"/></g></svg><div class="sl" style="color:#555558">Unused</div></div>
<div class="strip" style="left:412.5px;background:linear-gradient(180deg,#333336 0%,#333336 14%,#2f2f32 45.6%,#2b2b2e 74%,#29292c 100%)"><div class="tb" style="left:5.5px;background:#464649;border-color:#4a4a4d"></div><div class="tb" style="left:35.5px;background:#464649;border-color:#4a4a4d"></div><div class="trk" style="top:83px;height:36px;background:#252527;left:19.3px;width:4.2px;border-radius:2px"></div><div class="trk" style="top:131px;height:129px;background:#59595c;left:19.9px;width:3px"></div><div class="meter" style="background:rgba(0,0,0,.32)"><i style="top:5.72px;background:rgba(255,255,255,.035)"></i><i style="top:10.14px;background:rgba(255,255,255,.035)"></i><i style="top:14.56px;background:rgba(255,255,255,.035)"></i><i style="top:18.98px;background:rgba(255,255,255,.035)"></i><i style="top:23.40px;background:rgba(255,255,255,.035)"></i><i style="top:27.82px;background:rgba(255,255,255,.035)"></i><i style="top:32.24px;background:rgba(255,255,255,.035)"></i><i style="top:36.66px;background:rgba(255,255,255,.035)"></i><i style="top:41.08px;background:rgba(255,255,255,.035)"></i><i style="top:45.50px;background:rgba(255,255,255,.035)"></i><i style="top:49.92px;background:rgba(255,255,255,.035)"></i><i style="top:54.34px;background:rgba(255,255,255,.035)"></i><i style="top:58.76px;background:rgba(255,255,255,.035)"></i><i style="top:63.18px;background:rgba(255,255,255,.035)"></i><i style="top:67.60px;background:rgba(255,255,255,.035)"></i><i style="top:72.02px;background:rgba(255,255,255,.035)"></i><i style="top:76.44px;background:rgba(255,255,255,.035)"></i><i style="top:80.86px;background:rgba(255,255,255,.035)"></i><i style="top:85.28px;background:rgba(255,255,255,.035)"></i><i style="top:89.70px;background:rgba(255,255,255,.035)"></i><i style="top:94.12px;background:rgba(255,255,255,.035)"></i><i style="top:98.54px;background:rgba(255,255,255,.035)"></i><i style="top:102.96px;background:rgba(255,255,255,.035)"></i><i style="top:107.38px;background:rgba(255,255,255,.035)"></i><i style="top:111.80px;background:rgba(255,255,255,.035)"></i><i style="top:116.22px;background:rgba(255,255,255,.035)"></i><i style="top:120.64px;background:rgba(255,255,255,.035)"></i><i style="top:125.06px;background:rgba(255,255,255,.035)"></i><i style="top:129.48px;background:rgba(255,255,255,.035)"></i><i style="top:133.90px;background:rgba(255,255,255,.035)"></i><i style="top:138.32px;background:rgba(255,255,255,.035)"></i><i style="top:142.74px;background:rgba(255,255,255,.035)"></i><i style="top:147.16px;background:rgba(255,255,255,.035)"></i><i style="top:151.58px;background:rgba(255,255,255,.035)"></i><i style="top:156.00px;background:rgba(255,255,255,.035)"></i><i style="top:160.42px;background:rgba(255,255,255,.035)"></i><i style="top:164.84px;background:rgba(255,255,255,.035)"></i><i style="top:169.26px;background:rgba(255,255,255,.035)"></i><i style="top:173.68px;background:rgba(255,255,255,.035)"></i><i style="top:178.10px;background:rgba(255,255,255,.035)"></i></div><div class="knob dimk" style="top:116px"><b style="background:#77777a"></b><u></u></div><svg class="a" style="left:26.5px;top:345.5px" width="11" height="10" viewBox="0 0 11 10"><g stroke="#555558" stroke-width="1.1" stroke-linecap="round"><path d="M1,2 H10"/><path d="M1,5 H10"/><path d="M1,8 H10"/></g><g fill="#555558"><circle cx="7" cy="2" r="1.3"/><circle cx="3.6" cy="5" r="1.3"/><circle cx="6.4" cy="8" r="1.3"/></g></svg><div class="sl" style="color:#555558">Unused</div></div>
<div class="a" style="left:73.5px;top:0;width:1px;height:405px;background:#2c2f36"></div>
</div>
<svg class="a" style="left:676px;top:274px" width="83" height="14" viewBox="0 0 83 14"><g fill="none" stroke="#d4d4d4" stroke-width="1.1"><rect x="2.6" y="2.9" width="8.2" height="8.2" rx="0.8"/></g><g fill="#d4d4d4"><circle cx="2.6" cy="2.9" r="1.5"/><circle cx="10.8" cy="2.9" r="1.5"/><circle cx="2.6" cy="11.1" r="1.5"/><circle cx="10.8" cy="11.1" r="1.5"/></g><path d="M18.5,6.3 L21,8.9 L23.5,6.3" fill="none" stroke="#d4d4d4" stroke-width="1.3" stroke-linecap="round" stroke-linejoin="round"/><g stroke="#d4d4d4" stroke-linecap="round"><path d="M35.5,5.5 L42,12" stroke-width="2"/><path d="M32.5,2.5 L34,4" stroke-width="1"/><path d="M36.5,1.2 V3.2" stroke-width="1"/><path d="M31.2,6.6 H33.2" stroke-width="1"/><path d="M39.5,2.8 L38.4,3.9" stroke-width="1"/><path d="M32.6,10 L33.7,8.9" stroke-width="1"/></g><path d="M49.0,6.3 L51.5,8.9 L54.0,6.3" fill="none" stroke="#d4d4d4" stroke-width="1.3" stroke-linecap="round" stroke-linejoin="round"/><g fill="none" stroke="#d4d4d4" stroke-width="1.2" stroke-linecap="round"><path d="M65.6,11.2 A5.4,5.4 0 1 1 72.4,11.2"/><path d="M69,7.6 L71.6,4.2"/></g><circle cx="69" cy="7.6" r="1.3" fill="#d4d4d4"/><path d="M79.0,6.3 L81.5,8.9 L84.0,6.3" fill="none" stroke="#d4d4d4" stroke-width="1.3" stroke-linecap="round" stroke-linejoin="round"/></svg>
<svg class="a" style="left:180px;top:530px;z-index:6" width="300" height="26" viewBox="0 0 300 26"><path d="M2.5,9 Q6,9.5 8.2,11.5 Q10,16 12.2,19.6 Q15,18 18.4,13.8 Q21,9.6 24.5,9.2 Q27.5,10 30,11.6 Q34,11 37.6,9.4" fill="none" stroke="#0a0a0a" stroke-width="5" stroke-linecap="round" stroke-linejoin="round"/><circle cx="8.2" cy="11.2" r="1.7" fill="#f6f6f6"/><circle cx="37.8" cy="9.3" r="1.7" fill="#f6f6f6"/><circle cx="8.2" cy="16" r="1" fill="#bdbdbd"/><circle cx="16.3" cy="16.3" r="0.9" fill="#8a8a8a"/><circle cx="18" cy="14" r="0.9" fill="#a0a0a0"/><circle cx="5.6" cy="2.4" r="0.7" fill="#e0e0e0"/><circle cx="5.9" cy="5.4" r="0.7" fill="#e0e0e0"/><path d="M258,9.5 Q262,14.5 266,17.5 Q269,17 273,12 Q276,9 283,8.8" fill="none" stroke="#0b0b0b" stroke-width="4.4" stroke-linecap="round" stroke-linejoin="round"/><path d="M282,7.2 L284.4,9 L282.6,11 L280.6,9.2 Z" fill="#f4f4f4"/><circle cx="261.5" cy="11.6" r="1" fill="#cfcfcf"/><circle cx="270" cy="15.4" r="0.9" fill="#666"/></svg>
<div class="a" style="left:182.8px;top:326px;width:1px;height:394px;background:#96463e;z-index:5;opacity:.7"></div>
<svg class="a" style="left:179.3px;top:317px;z-index:5" width="8" height="11" viewBox="0 0 8 11"><path d="M1.2,0.8 H6.8 Q7.3,0.8 7.3,1.4 V6 L4,9.8 L0.7,6 V1.4 Q0.7,0.8 1.2,0.8 Z" fill="#2c1c1a" stroke="#b8463e" stroke-width="1.1"/></svg>
<svg class="a" style="left:176px;top:456px;z-index:20" width="32" height="44" viewBox="0 0 32 44"><path d="M4.8,5 L4.8,32.8 L11.3,27 L16.8,39.4 L21.6,37.3 L16.2,25.2 L25.2,24.8 Z" fill="#0a0a0a" stroke="#ffffff" stroke-width="2.2" stroke-linejoin="round"/></svg>
<div class="a" style="left:655.5px;top:675.5px;width:162px;height:34.5px;background:#272727;border:1px solid #474747;border-radius:6px;z-index:10;box-shadow:0 1px 4px rgba(0,0,0,.5)"></div>
<svg class="a" style="left:655px;top:675px;z-index:11" width="164" height="36" viewBox="0 0 164 36"><circle cx="19" cy="17.8" r="5.3" fill="none" stroke="#d83a50" stroke-width="1.4"/><rect x="16.6" y="15.4" width="4.8" height="4.8" rx="0.8" fill="#d83a50"/><path d="M63,6.5 V28.5" stroke="#454545" stroke-width="1"/><circle cx="79.8" cy="17.8" r="5.5" fill="none" stroke="#f2f2f2" stroke-width="1.5"/><path d="M78.3,15.4 V20.2 M81.3,15.4 V20.2" stroke="#f2f2f2" stroke-width="1.3"/><path d="M112.7,13.3 A4.9,4.9 0 1 1 108.3,16" fill="none" stroke="#f2f2f2" stroke-width="1.35" stroke-linecap="round"/><path d="M114.3,10.6 L111.3,13.3 L114.3,15.8" fill="none" stroke="#f2f2f2" stroke-width="1.35" stroke-linecap="round" stroke-linejoin="round"/><g fill="none" stroke="#f2f2f2" stroke-width="1.2" stroke-linejoin="round" stroke-linecap="round"><path d="M140.2,13.6 H149.8"/><path d="M143.3,13.4 V12.2 H146.7 V13.4"/><path d="M141.3,13.8 L141.9,22.6 Q142,23.4 142.8,23.4 H147.2 Q148,23.4 148.1,22.6 L148.7,13.8"/></g><rect x="142.6" y="15" width="4.8" height="7.4" fill="#bdbdbd"/></svg>
<div class="a" style="left:686px;top:686.5px;z-index:12;font-size:9.7px;font-weight:700;line-height:12px;color:#cf3a4e;letter-spacing:0">0:40</div>
</div>
<div class="bar" style="left:0;width:83px"></div>
<div class="bar" style="left:1197px;width:83px"></div>
</body>
</html>
